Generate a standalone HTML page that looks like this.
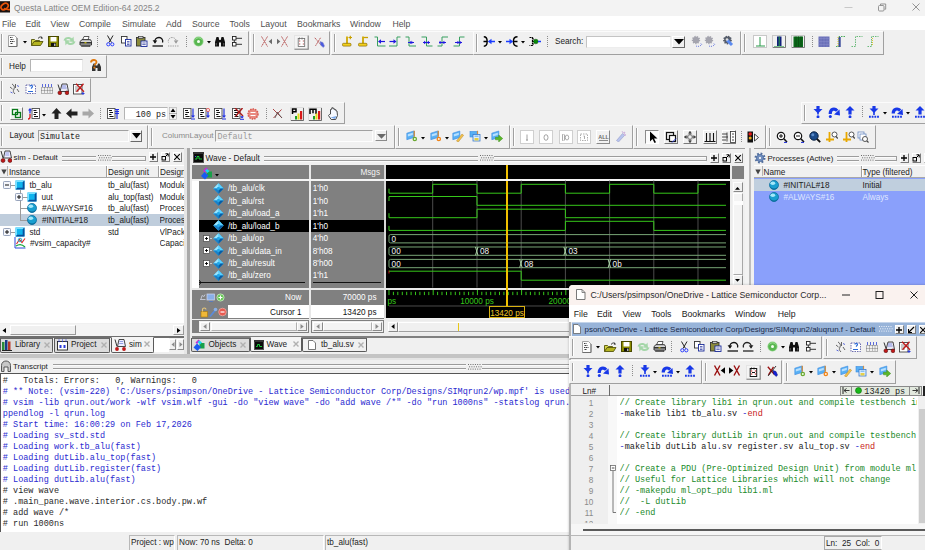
<!DOCTYPE html>
<html><head><meta charset="utf-8"><title>Questa Lattice OEM Edition-64 2025.2</title><style>
html,body{margin:0;padding:0}
body{width:925px;height:550px;overflow:hidden;background:#f0f0f0;position:relative;font-family:"Liberation Sans",sans-serif}
div,span,svg{position:absolute;box-sizing:border-box}
span{white-space:pre}
.s{font-family:"Liberation Sans",sans-serif}
.m{font-family:"Liberation Mono",monospace}
</style></head><body>
<div style="left:0px;top:0px;width:925px;height:16px;background:#f3f3f3;"></div>
<svg style="left:0px;top:0px;" width="11" height="14" viewBox="0 0 11 14"><rect x="0" y="1.200" width="10" height="11.300" fill="#1a1210"/><ellipse cx="4.600" cy="6.500" rx="3.900" ry="2.700" transform="rotate(-35 4.600 6.500)" fill="none" stroke="#e8540a" stroke-width="1.700"/><path d="M4 8.500c2 0 3.500 1.500 6 1" fill="none" stroke="#e8540a" stroke-width="1.600"/></svg>
<span class="s" style="left:14px;top:2.2px;height:12px;line-height:12px;font-size:8.5px;color:#858585;">Questa Lattice OEM Edition-64 2025.2</span>
<svg style="left:840px;top:0px;" width="85" height="16" viewBox="0 0 85 16"><path d="M4.5 7.5h8" stroke="#c8c8c8" stroke-width="1"/><rect x="38.5" y="5.5" width="5.5" height="5.5" rx="1" fill="none" stroke="#8a8a8a" stroke-width="0.9"/><path d="M40.5 5.2v-1.2h5.2v5.2h-1.2" fill="none" stroke="#8a8a8a" stroke-width="0.9"/><path d="M72.5 3.5l7 7m0-7l-7 7" stroke="#8a8a8a" stroke-width="0.9"/></svg>
<div style="left:0px;top:16.2px;width:925px;height:14.3px;background:#ffffff;"></div>
<span class="s" style="left:2px;top:17.8px;height:12px;line-height:12px;font-size:8.7px;color:#505050;">File</span>
<span class="s" style="left:25.5px;top:17.8px;height:12px;line-height:12px;font-size:8.7px;color:#505050;">Edit</span>
<span class="s" style="left:50.5px;top:17.8px;height:12px;line-height:12px;font-size:8.7px;color:#505050;">View</span>
<span class="s" style="left:79px;top:17.8px;height:12px;line-height:12px;font-size:8.7px;color:#505050;">Compile</span>
<span class="s" style="left:122px;top:17.8px;height:12px;line-height:12px;font-size:8.7px;color:#505050;">Simulate</span>
<span class="s" style="left:166px;top:17.8px;height:12px;line-height:12px;font-size:8.7px;color:#505050;">Add</span>
<span class="s" style="left:192px;top:17.8px;height:12px;line-height:12px;font-size:8.7px;color:#505050;">Source</span>
<span class="s" style="left:229.5px;top:17.8px;height:12px;line-height:12px;font-size:8.7px;color:#505050;">Tools</span>
<span class="s" style="left:260.5px;top:17.8px;height:12px;line-height:12px;font-size:8.7px;color:#505050;">Layout</span>
<span class="s" style="left:297px;top:17.8px;height:12px;line-height:12px;font-size:8.7px;color:#505050;">Bookmarks</span>
<span class="s" style="left:350px;top:17.8px;height:12px;line-height:12px;font-size:8.7px;color:#505050;">Window</span>
<span class="s" style="left:392.5px;top:17.8px;height:12px;line-height:12px;font-size:8.7px;color:#505050;">Help</span>
<div style="left:-2px;top:31px;width:251px;height:24px;background:#f0f0f0;border-top:1px solid #fbfbfb;border-left:1px solid #fbfbfb;border-right:1px solid #a0a0a0;border-bottom:1px solid #a0a0a0;"></div>
<div style="left:1px;top:34px;width:1px;height:18px;background:#a0a0a0;"></div>
<div style="left:2px;top:34px;width:1px;height:18px;background:#ffffff;"></div>
<svg style="left:8px;top:35.4px;" width="10" height="12" viewBox="0 0 10 12"><path d="M.5 .5h6l2.500 2.500v8.500h-8.500z" fill="#fcfcfc" stroke="#a4a4a4"/><path d="M9 3v8.500h-8.500" fill="none" stroke="#6e6e6e"/><path d="M2 2.500h2.500M2.500 4.500h3M2 6.500h4.500M2.500 8.500h2.500" stroke="#3a3a3a" stroke-width="1" stroke-dasharray="1.500 .5"/></svg>
<svg style="left:23px;top:40.9px;" width="4" height="3" viewBox="0 0 4 3"><path d="M0 0h4L2 2.4z" fill="#000"/></svg>
<svg style="left:31px;top:36.4px;" width="13" height="10" viewBox="0 0 13 10"><path d="M7 2.500c1.500-2 3.500-2 4.500-.5" fill="none" stroke="#222" stroke-width=".9"/><path d="M10.300 .8l1.500 1.400-2 .5z" fill="#222"/><path d="M.5 9.500v-6h3l1 1h4v1.500" fill="#d8d84a" stroke="#55550a" stroke-width=".9"/><path d="M.5 9.500l2.500-4h9l-2.500 4z" fill="#b4b420" stroke="#55550a" stroke-width=".9"/></svg>
<svg style="left:48px;top:35.9px;" width="11" height="11" viewBox="0 0 11 11"><rect x=".5" y=".5" width="10" height="10" fill="#8a8a00" stroke="#4a4a00"/><rect x="2.500" y="1" width="6" height="4.500" fill="#fff"/><rect x="3" y="7" width="5" height="3.500" fill="#111"/><rect x="6.200" y="7.600" width="1.200" height="2.400" fill="#ddd"/></svg>
<svg style="left:63px;top:35.4px;" width="13" height="12" viewBox="0 0 13 12"><path d="M.5 5.500c1-4 6-4.500 8.500-2l1.500-2 .5 5.500-5-.5 1.500-1.500c-1.500-1.500-4-1-5 .8z" fill="#a4d6a8"/><path d="M12.500 6.500c-1 4-6 4.500-8.500 2l-1.500 2-.5-5.500 5 .5-1.500 1.500c1.500 1.500 4 1 5-.8z" fill="#a4d6a8"/></svg>
<svg style="left:79px;top:35.9px;" width="13" height="11" viewBox="0 0 13 11"><path d="M3.500 4l1.500-3.500h5l-1 3.500z" fill="#fff" stroke="#333" stroke-width=".8"/><path d="M1 5.500l2-1.800h8.500l1 1.800v3.500h-11.500z" fill="#d8d8d8" stroke="#222" stroke-width=".9"/><rect x="1" y="6" width="11.500" height="1.600" fill="#333"/><rect x="5.500" y="6.300" width="2" height="1" fill="#e6d700"/><path d="M2.500 9.500h8.500v1h-8.500z" fill="#fff" stroke="#222" stroke-width=".7"/></svg>
<div style="left:97px;top:35.9px;width:1px;height:11px;border-left:1px dotted #8c8c8c;"></div>
<svg style="left:106px;top:35.4px;" width="9" height="12" viewBox="0 0 9 12"><path d="M1.500 .5l4 7M7 .5l-4 7" stroke="#222" stroke-width="1"/><circle cx="2.300" cy="9.300" r="1.600" fill="none" stroke="#2a3cff" stroke-width="1"/><circle cx="6.300" cy="9.300" r="1.600" fill="none" stroke="#2a3cff" stroke-width="1"/></svg>
<svg style="left:121px;top:35.9px;" width="11" height="11" viewBox="0 0 11 11"><rect x=".5" y=".5" width="5.500" height="6.500" fill="#fff" stroke="#333" stroke-width=".9"/><rect x="4.500" y="3.500" width="5.500" height="6.500" fill="#fff" stroke="#1a2a9a" stroke-width=".9"/><path d="M6 5.500h2.500M6 7h2.500M6 8.500h2.500" stroke="#1a2a9a" stroke-width=".7"/></svg>
<svg style="left:136px;top:35.9px;" width="12" height="11" viewBox="0 0 12 11"><rect x=".5" y="1.500" width="8.500" height="8.500" fill="#8a8a3a" stroke="#333" stroke-width=".9"/><rect x="2.500" y=".3" width="4.500" height="2.200" fill="#ccc" stroke="#333" stroke-width=".7"/><rect x="5" y="5" width="6" height="5.500" fill="#fff" stroke="#1a2a9a" stroke-width=".9"/><path d="M6.300 7h3.400M6.300 8.600h3.400" stroke="#1a2a9a" stroke-width=".7"/></svg>
<svg style="left:152px;top:35.9px;" width="12" height="11" viewBox="0 0 12 11"><g><path d="M3 6.500c-1-3 1.500-5 4-5s4.500 2.500 3.500 5" fill="none" stroke="#111" stroke-width="1.300"/><path d="M.6 4.300l2.400 3.500 2.200-3.300z" fill="#111"/><path d="M.5 10h10.500" stroke="#111" stroke-width="1.300"/></g></svg>
<svg style="left:167px;top:35.9px;" width="12" height="11" viewBox="0 0 12 11"><g transform="translate(12,0) scale(-1,1)"><path d="M3 6.500c-1-3 1.500-5 4-5s4.500 2.500 3.500 5" fill="none" stroke="#9a9a9a" stroke-width="1" stroke-dasharray="1.300 1"/><path d="M.6 4.300l2.400 3.500 2.200-3.300z" fill="#9a9a9a"/><path d="M.5 10h10.500" stroke="#9a9a9a" stroke-width="1" stroke-dasharray="1.300 1"/></g></svg>
<div style="left:186px;top:35.9px;width:1px;height:11px;border-left:1px dotted #8c8c8c;"></div>
<svg style="left:192.5px;top:35.9px;" width="11" height="11" viewBox="0 0 11 11"><circle cx="5.500" cy="5.500" r="5" fill="#8fd488"/><circle cx="5.500" cy="5.500" r="4.200" fill="#58b650"/><circle cx="5.500" cy="5.500" r="1.500" fill="#f4fff2"/><path d="M2.500 3.500a3.500 3.500 0 0 1 6 0" fill="none" stroke="#a8e4a0" stroke-width=".8"/></svg>
<svg style="left:207px;top:40.9px;" width="4" height="3" viewBox="0 0 4 3"><path d="M0 0h4L2 2.4z" fill="#000"/></svg>
<svg style="left:214px;top:35.9px;" width="12" height="11" viewBox="0 0 12 11"><path d="M1 10.500v-4.500l1.500-5h2l.8 3h1.400l.8-3h2l1.500 5v4.500h-4v-4h-2v4z" fill="#111"/><path d="M2.200 7v2.500M9.800 7v2.500" stroke="#777" stroke-width=".8"/></svg>
<svg style="left:232px;top:35.9px;" width="11" height="11" viewBox="0 0 11 11"><rect x=".5" y=".5" width="3.500" height="3.500" fill="#fff" stroke="#222" stroke-width=".9"/><rect x=".5" y="6.500" width="3.500" height="3.500" fill="#fff" stroke="#222" stroke-width=".9"/><path d="M4 2.300h6M4 8.300h6M2.300 4v2.500" stroke="#222" stroke-width=".9"/></svg>
<div style="left:250px;top:31px;width:80px;height:24px;background:#f0f0f0;border-top:1px solid #fbfbfb;border-left:1px solid #fbfbfb;border-right:1px solid #a0a0a0;border-bottom:1px solid #a0a0a0;"></div>
<div style="left:253px;top:34px;width:1px;height:18px;background:#a0a0a0;"></div>
<div style="left:254px;top:34px;width:1px;height:18px;background:#ffffff;"></div>
<svg style="left:260px;top:35.9px;" width="13" height="11" viewBox="0 0 13 11"><g><path d="M1.500 .5l6 10M7.500 .5l-6 10" stroke="#b85a5a" stroke-width="1" stroke-dasharray="1.600 .5"/><path d="M12 2.800v5.400l-3.300-2.700z" fill="#6a6a6a"/></g></svg>
<svg style="left:276px;top:35.9px;" width="13" height="11" viewBox="0 0 13 11"><g transform="translate(13,0) scale(-1,1)"><path d="M1.500 .5l6 10M7.500 .5l-6 10" stroke="#b85a5a" stroke-width="1" stroke-dasharray="1.600 .5"/><path d="M12 2.800v5.400l-3.300-2.700z" fill="#6a6a6a"/></g></svg>
<svg style="left:293.8px;top:35.1px;" width="15" height="15" viewBox="0 0 15 15"><rect x=".5" y=".5" width="13.500" height="13.700" fill="#f4f4f4" stroke="#e4e4e4"/><path d="M.5 14.200h14M14.200 .5v14" stroke="#7a7a7a" stroke-width="1"/><rect x="4.200" y="3.500" width="6.500" height="8" fill="#fff" stroke="#6a6a6a" stroke-width="0.8"/><path d="M5.500 2.500v2M8 2.500v2" stroke="#6a6a6a" stroke-width=".8"/><path d="M5 6h1.300M8.800 6h1.300M5 9h1.300M8.800 9h1.300" stroke="#b85a5a" stroke-width="1"/></svg>
<svg style="left:314px;top:36.9px;" width="11" height="12" viewBox="0 0 11 12"><path d="M.8 .8l6.500 7.500M6.500 .8l-5 8" stroke="#b85a5a" stroke-width="1" stroke-dasharray="1.600 .5"/><path d="M6 4.500l3 1 1.500 3.500-1.200 1.500-2.800-2.500z" fill="#4a5ae0" stroke="#8a8ac0" stroke-width=".5"/></svg>
<div style="left:331px;top:31px;width:143px;height:24px;background:#f0f0f0;border-top:1px solid #fbfbfb;border-left:1px solid #fbfbfb;border-right:1px solid #a0a0a0;border-bottom:1px solid #a0a0a0;"></div>
<div style="left:334px;top:34px;width:1px;height:18px;background:#a0a0a0;"></div>
<div style="left:335px;top:34px;width:1px;height:18px;background:#ffffff;"></div>
<svg style="left:341px;top:35.4px;" width="12" height="12" viewBox="0 0 12 12"><path d="M6 1.500v7.500" stroke="#d0a800" stroke-width="1.800"/><rect x="1.500" y="8.300" width="8.500" height="2.800" rx="1" fill="#f2cf1e" stroke="#8a6c00" stroke-width=".7"/><path d="M7.500 2.500h3.500M9.300 .8v3.500" stroke="#c8a000" stroke-width="1.200"/></svg>
<svg style="left:356.5px;top:35.4px;" width="12" height="12" viewBox="0 0 12 12"><path d="M6 1.500v7.500" stroke="#d0a800" stroke-width="1.800"/><rect x="1.500" y="8.300" width="8.500" height="2.800" rx="1" fill="#f2cf1e" stroke="#8a6c00" stroke-width=".7"/><path d="M6.500 2.500h4.500" stroke="#c8a000" stroke-width="1.300"/></svg>
<svg style="left:374px;top:35.9px;" width="12" height="11" viewBox="0 0 12 11"><path d="M.5 1h3v9h8" fill="none" stroke="#38a060" stroke-width="1"/><path d="M11 5.500h-6" stroke="#2018e0" stroke-width="1.200"/><path d="M4 5.500l3-2.200v4.400z" fill="#2018e0"/></svg>
<svg style="left:389px;top:35.9px;" width="12" height="11" viewBox="0 0 12 11"><path d="M0 10h8v-9h3.500" fill="none" stroke="#38a060" stroke-width="1"/><path d="M.5 5.500h6" stroke="#2018e0" stroke-width="1.200"/><path d="M7.500 5.500l-3-2.200v4.400z" fill="#2018e0"/></svg>
<svg style="left:405px;top:35.9px;" width="12" height="11" viewBox="0 0 12 11"><path d="M.5 1h3.500v9h7" fill="none" stroke="#38a060" stroke-width="1"/><path d="M3 6.500h6" stroke="#2018e0" stroke-width="1"/><path d="M4 6.500l2.400-1.800v3.600zM8.500 6.500l-2.400-1.800v3.600z" fill="#2018e0"/></svg>
<svg style="left:421px;top:35.9px;" width="12" height="11" viewBox="0 0 12 11"><path d="M.5 1h5v9h6" fill="none" stroke="#38a060" stroke-width="1"/><path d="M2 6.500h7" stroke="#2018e0" stroke-width="1"/><path d="M5.500 6.500l-2.400-1.800v3.600zM5.500 6.500l2.400-1.800v3.600z" fill="#2018e0"/></svg>
<svg style="left:437px;top:35.9px;" width="12" height="11" viewBox="0 0 12 11"><path d="M.5 10h4.500v-9h6" fill="none" stroke="#38a060" stroke-width="1"/><path d="M2 6.500h7" stroke="#2018e0" stroke-width="1"/><path d="M5 6.500l-2.400-1.800v3.600zM5 6.500l2.400-1.800v3.600z" fill="#2018e0"/></svg>
<svg style="left:453px;top:35.9px;" width="12" height="11" viewBox="0 0 12 11"><path d="M.5 10h6v-9h5" fill="none" stroke="#38a060" stroke-width="1"/><path d="M2 6.500h7" stroke="#2018e0" stroke-width="1"/><path d="M3 6.500l2.400-1.800v3.600zM9 6.500l-2.400-1.800v3.600z" fill="#2018e0"/></svg>
<div style="left:473px;top:31px;width:268px;height:24px;background:#f0f0f0;border-top:1px solid #fbfbfb;border-left:1px solid #fbfbfb;border-right:1px solid #a0a0a0;border-bottom:1px solid #a0a0a0;"></div>
<div style="left:476px;top:34px;width:1px;height:18px;background:#a0a0a0;"></div>
<div style="left:477px;top:34px;width:1px;height:18px;background:#ffffff;"></div>
<svg style="left:483px;top:35.9px;" width="12" height="11" viewBox="0 0 12 11"><path d="M.8 .8c4.500 0 4.500 9.400 0 9.400M.5 5.500h3.500" fill="none" stroke="#000" stroke-width="1.400"/><path d="M12 5.500h-4" stroke="#1a3cff" stroke-width="1.500"/><path d="M4.800 5.500l3.700-2.800v5.600z" fill="#1a3cff"/></svg>
<svg style="left:498px;top:40.9px;" width="4" height="3" viewBox="0 0 4 3"><path d="M0 0h4L2 2.4z" fill="#000"/></svg>
<svg style="left:506px;top:35.9px;" width="12" height="11" viewBox="0 0 12 11"><path d="M11.500 .8c-5.500 0-5.500 9.400 0 9.400M7.500 5.500h4" fill="none" stroke="#000" stroke-width="1.400"/><path d="M0 5.500h4" stroke="#1a3cff" stroke-width="1.500"/><path d="M7.200 5.500l-3.700-2.800v5.600z" fill="#1a3cff"/></svg>
<svg style="left:520.5px;top:40.9px;" width="4" height="3" viewBox="0 0 4 3"><path d="M0 0h4L2 2.4z" fill="#000"/></svg>
<svg style="left:529px;top:35.9px;" width="12" height="11" viewBox="0 0 12 11"><path d="M.5 1.500h3v8h-3M3.500 3h1.500M3.500 8h1.500" fill="none" stroke="#000" stroke-width="1.200" stroke-dasharray="2 .7"/><path d="M3 5.500h2" stroke="#000" stroke-width="1.200"/><circle cx="6.800" cy="5.500" r="2.300" fill="#0a8a0a" stroke="#064a06" stroke-width=".5"/><path d="M9 5.500h3" stroke="#1a3cff" stroke-width="1.500"/></svg>
<div style="left:547px;top:35.9px;width:1px;height:11px;border-left:1px dotted #8c8c8c;"></div>
<span class="s" style="left:555px;top:35.8px;height:12px;line-height:12px;font-size:8.2px;color:#222;">Search:</span>
<div style="left:586px;top:35.5px;width:85px;height:12.5px;background:#fff;border:1px solid #c4c4c4;border-right-color:#ededed;border-bottom-color:#ededed;"></div>
<div style="left:672px;top:35.5px;width:13px;height:12.5px;background:#f0f0f0;border:1px solid #fff;border-right-color:#6a6a6a;border-bottom-color:#6a6a6a;"></div>
<svg style="left:673.5px;top:39.3px;" width="10" height="6" viewBox="0 0 10 6"><path d="M0 0h10L5 5.500z" fill="#000"/></svg>
<svg style="left:691px;top:35.4px;" width="12" height="12" viewBox="0 0 12 12"><circle cx="5" cy="5" r="3.200" fill="#a4a4ae" stroke="#a4a4ae" stroke-width="2" stroke-dasharray="1.200 1"/><path d="M5 11c2 1 5 0 6-2l-1.500-.5" fill="none" stroke="#6a7ae0" stroke-width="1" stroke-dasharray="1 1"/></svg>
<svg style="left:704px;top:35.4px;" width="12" height="12" viewBox="0 0 12 12"><circle cx="5" cy="5" r="3.200" fill="#a4a4ae" stroke="#a4a4ae" stroke-width="2" stroke-dasharray="1.200 1"/><path d="M5 11c2 1 5 0 6-2l-1.500-.5" fill="none" stroke="#6a7ae0" stroke-width="1" stroke-dasharray="1 1"/></svg>
<svg style="left:721.5px;top:35.4px;" width="12" height="12" viewBox="0 0 12 12"><circle cx="5.500" cy="5" r="3.400" fill="#555c6a" stroke="#555c6a" stroke-width="2" stroke-dasharray="1.300 1"/><path d="M5 5l5 5" stroke="#5a8af0" stroke-width="3"/><circle cx="5" cy="4.500" r="1.300" fill="#ddd"/></svg>
<div style="left:741px;top:31px;width:143px;height:24px;background:#f0f0f0;border-top:1px solid #fbfbfb;border-left:1px solid #fbfbfb;border-right:1px solid #a0a0a0;border-bottom:1px solid #a0a0a0;"></div>
<div style="left:744px;top:34px;width:1px;height:18px;background:#a0a0a0;"></div>
<div style="left:745px;top:34px;width:1px;height:18px;background:#ffffff;"></div>
<svg style="left:753px;top:34.9px;" width="14" height="13" viewBox="0 0 14 13"><rect x=".5" y=".5" width="13" height="12" fill="#fff" stroke="#c8c8c8"/><path d="M7 2v9M3 11h9" stroke="#2a9a4a" stroke-width="1"/></svg>
<svg style="left:772px;top:34.9px;" width="14" height="13" viewBox="0 0 14 13"><rect x=".5" y=".5" width="13" height="12" fill="#f0f0f0" stroke="#c8c8c8"/><path d="M1 12.500h12.500M13.500 1v11.500" stroke="#7a7a7a" stroke-width="1"/><rect x="5" y="1.500" width="4.500" height="10" fill="#10207a"/><path d="M7.200 1.500v10" stroke="#2a9a4a" stroke-width="1"/><path d="M2 11.500h10" stroke="#7ac08a" stroke-width="1"/></svg>
<svg style="left:791px;top:34.9px;" width="14" height="13" viewBox="0 0 14 13"><rect x=".5" y=".5" width="13" height="12" fill="#f0f0f0" stroke="#c8c8c8"/><path d="M1 12.500h12.500M13.500 1v11.500" stroke="#7a7a7a" stroke-width="1"/><rect x="2.500" y="1.500" width="9.500" height="10.500" fill="#0a6a1a"/><path d="M5 1.500v10.500M7.500 1.500v10.500M10 1.500v10.500" stroke="#0a4a10" stroke-width=".8"/></svg>
<div style="left:812px;top:35.9px;width:1px;height:11px;border-left:1px dotted #8c8c8c;"></div>
<svg style="left:818px;top:35.9px;" width="12" height="12" viewBox="0 0 12 12"><rect x=".5" y=".5" width="11" height="10.500" fill="#6a70b8"/><path d="M.5 2.500h11M.5 5.500h11M.5 8.500h11M3 .5v10.500M6 .5v10.500M9 .5v10.500" stroke="#9aa0d8" stroke-width=".6" stroke-dasharray="1 1"/></svg>
<svg style="left:834.5px;top:35.9px;" width="12" height="12" viewBox="0 0 12 12"><path d="M1 10.500h3v-10h7" fill="none" stroke="#4aaa5a" stroke-width="1" stroke-dasharray="1.500 1"/><rect x="3.500" y="1" width="2.200" height="10" fill="#3a4a9a"/><path d="M3 1v10" stroke="#d8c020" stroke-width=".9" stroke-dasharray="1 1"/></svg>
<svg style="left:851px;top:35.9px;" width="12" height="12" viewBox="0 0 12 12"><path d="M.5 10.500h4v-10h7" fill="none" stroke="#6aba7a" stroke-width="1" stroke-dasharray="1.500 1"/></svg>
<svg style="left:866.5px;top:35.9px;" width="12" height="12" viewBox="0 0 12 12"><path d="M.5 10.500h4v-10h7" fill="none" stroke="#6aba7a" stroke-width="1" stroke-dasharray="1.500 1"/><path d="M5.500 2v8" stroke="#d8c020" stroke-width=".9" stroke-dasharray="1 1"/></svg>
<div style="left:-2px;top:55px;width:109px;height:23px;background:#f0f0f0;border-top:1px solid #fbfbfb;border-left:1px solid #fbfbfb;border-right:1px solid #a0a0a0;border-bottom:1px solid #a0a0a0;"></div>
<div style="left:1px;top:58px;width:1px;height:17px;background:#a0a0a0;"></div>
<div style="left:2px;top:58px;width:1px;height:17px;background:#ffffff;"></div>
<span class="s" style="left:9px;top:60.7px;height:12px;line-height:12px;font-size:8.2px;color:#222;">Help</span>
<div style="left:30px;top:59px;width:53px;height:13px;background:#fff;border:1px solid #b4b4b4;border-right-color:#e8e8e8;border-bottom-color:#e8e8e8;"></div>
<svg style="left:89px;top:59px;" width="13" height="13" viewBox="0 0 13 13"><path d="M3 12v-4l1.500-3.500h1.500l.7 2h1.600l.7-2h1.500l1.500 3.500v4h-3.500v-3h-2v3z" fill="#333"/><path d="M2 3.500c0-3 5.500-3.500 5.500-.5 0 1.800-2 1.800-2 3.500" fill="none" stroke="#e07a10" stroke-width="1.800"/><circle cx="5.400" cy="8.600" r="1.100" fill="#e07a10"/></svg>
<div style="left:-2px;top:78px;width:93px;height:24px;background:#f0f0f0;border-top:1px solid #fbfbfb;border-left:1px solid #fbfbfb;border-right:1px solid #a0a0a0;border-bottom:1px solid #a0a0a0;"></div>
<div style="left:1px;top:81px;width:1px;height:18px;background:#a0a0a0;"></div>
<div style="left:2px;top:81px;width:1px;height:18px;background:#ffffff;"></div>
<svg style="left:9px;top:82.5px;" width="12" height="12" viewBox="0 0 12 12"><path d="M3 1c2 1 3 3 2 5s-1 3 1 5M6.500 1v4M1 4l2.500 2M8 6l2 3" fill="none" stroke="#555" stroke-width=".9"/><path d="M8 2.500l2 1M1.500 9l2 1" stroke="#4a5ad8" stroke-width=".9"/></svg>
<svg style="left:25px;top:82.5px;" width="12" height="12" viewBox="0 0 12 12"><rect x="1" y="2" width="9.500" height="8.500" fill="#fff" stroke="#4a4a9a" stroke-width=".8" stroke-dasharray="1.500 1"/><path d="M5 3.500c0-1.500 2.500-1.500 2.500 0 0 1-1.200 1-1.200 2.200" fill="none" stroke="#2a6ad8" stroke-width="1.100"/><path d="M3 8.500h5" stroke="#2a6ad8" stroke-width="1"/></svg>
<svg style="left:40.5px;top:82.5px;" width="12" height="12" viewBox="0 0 12 12"><path d="M1.500 1v3M4.500 1v3M7.500 1v3M10.500 1v3" stroke="#4a5ad8" stroke-width=".9"/><rect x=".5" y="4.500" width="11" height="6" fill="none" stroke="#555" stroke-width=".8" stroke-dasharray="1 1"/><path d="M3.500 4.500v6M6.500 4.500v6M9 4.500v6M.5 7.500h11" stroke="#555" stroke-width=".7" stroke-dasharray="1 1"/></svg>
<svg style="left:57px;top:82.5px;" width="12" height="12" viewBox="0 0 12 12"><path d="M3 8.500l2-7.500h5l1.500 7.500z" fill="#e8e8f4" stroke="#333" stroke-width=".9"/><path d="M5 3h4M4.600 5h5" stroke="#5a6ad8" stroke-width=".7"/><circle cx="2.800" cy="9.800" r="1.900" fill="#c01818" stroke="#400" stroke-width=".5"/><circle cx="10" cy="9.800" r="1.900" fill="#c01818" stroke="#400" stroke-width=".5"/><path d="M1 1.500l2 6" stroke="#333" stroke-width="1"/></svg>
<svg style="left:73px;top:82.5px;" width="12" height="12" viewBox="0 0 12 12"><rect x=".5" y="1.500" width="8.500" height="9.500" fill="#fff" stroke="#444" stroke-width=".9"/><path d="M2 4h5M2 6h5M2 8h4" stroke="#666" stroke-width=".7"/><path d="M3 .8l8 8M10.500 .8l-7 8" stroke="#c01818" stroke-width="1.300"/><path d="M8.500 10.500h3M10 9v3" stroke="#2a3ad8" stroke-width="1"/></svg>
<div style="left:-2px;top:102px;width:347px;height:22px;background:#f0f0f0;border-top:1px solid #fbfbfb;border-left:1px solid #fbfbfb;border-right:1px solid #a0a0a0;border-bottom:1px solid #a0a0a0;"></div>
<div style="left:1px;top:105px;width:1px;height:16px;background:#a0a0a0;"></div>
<div style="left:2px;top:105px;width:1px;height:16px;background:#ffffff;"></div>
<div style="left:10px;top:107px;width:13px;height:13px;background:#f0f0f0;border:1px solid #fff;border-right-color:#7a7a7a;border-bottom-color:#7a7a7a;"></div>
<svg style="left:11px;top:108px;" width="11" height="11" viewBox="0 0 11 11"><rect x="1.500" y="1.500" width="5" height="5" fill="#fff" stroke="#0a7a1a" stroke-width="1.300"/><rect x="4.500" y="4.500" width="5" height="5" fill="none" stroke="#0a7a1a" stroke-width="1.300"/></svg>
<svg style="left:27.5px;top:108px;" width="14" height="12" viewBox="0 0 14 12"><g transform="translate(2.500,0)"><rect x="1.500" y=".500" width="7.500" height="10" fill="#fff" stroke="#4a4a4a" stroke-width=".9"/><path d="M3 2.500h3M3.500 4.500h3.500M3 6.500h2.500M3.500 8.500h4" stroke="#111" stroke-width="1"/></g><path d="M2 5.500v-4" stroke="#2030e0" stroke-width="1.300"/><path d="M2 0l-2 2.500h4z" fill="#2030e0"/><path d="M2 6v3c0 1.500-1 2-2 2" fill="none" stroke="#d81818" stroke-width="1.300"/></svg>
<svg style="left:42px;top:113.5px;" width="4" height="3" viewBox="0 0 4 3"><path d="M0 0h4L2 2.4z" fill="#000"/></svg>
<svg style="left:50.5px;top:108px;" width="12" height="11" viewBox="0 0 12 11"><path d="M5.500 0l5 5.500h-3v5.500h-4v-5.500h-3z" fill="#222"/></svg>
<svg style="left:66px;top:108px;" width="12" height="11" viewBox="0 0 12 11"><path d="M0 5.500l5.500-5v3h6v4h-6v3z" fill="#222"/></svg>
<svg style="left:81.5px;top:108px;" width="12" height="11" viewBox="0 0 12 11"><path d="M12 5.500l-5.500-5v3h-6v4h6v3z" fill="#a8a8a8"/></svg>
<div style="left:100px;top:108px;width:1px;height:11px;border-left:1px dotted #8c8c8c;"></div>
<svg style="left:105.5px;top:108px;" width="14" height="12" viewBox="0 0 14 12"><rect x="1.500" y=".500" width="7.500" height="10" fill="#fff" stroke="#4a4a4a" stroke-width=".9"/><path d="M3 2.500h3M3.500 4.500h3.500M3 6.500h2.500M3.500 8.500h4" stroke="#111" stroke-width="1"/><path d="M11 1v10" stroke="#2030e0" stroke-width="1.200"/><path d="M9 1.500h4M9 3.500h4M9 5.500h4" stroke="#2030e0" stroke-width="1"/></svg>
<div style="left:124px;top:107px;width:44px;height:13px;background:#fff;border:1px solid #b4b4b4;border-right-color:#e8e8e8;border-bottom-color:#e8e8e8;"></div>
<span class="m" style="right:759px;top:108.7px;height:12px;line-height:12px;font-size:8.4px;color:#222;">100 ps</span>
<svg style="left:168.5px;top:107px;" width="8" height="13" viewBox="0 0 8 13"><rect x=".5" y=".5" width="7" height="12" fill="#f0f0f0" stroke="#b0b0b0" stroke-width=".6"/><path d="M4 1.500l2.500 3.500h-5zM4 11.500l2.500-3.500h-5z" fill="#000"/><path d="M0 6.500h8" stroke="#888" stroke-width=".6"/></svg>
<svg style="left:181.5px;top:108px;" width="14" height="12" viewBox="0 0 14 12"><rect x="1.500" y=".500" width="7.500" height="10" fill="#fff" stroke="#4a4a4a" stroke-width=".9"/><path d="M3 2.500h3M3.500 4.500h3.500M3 6.500h2.500M3.500 8.500h4" stroke="#111" stroke-width="1"/><path d="M11 .5v8" stroke="#2030e0" stroke-width="1.200"/><path d="M11 10l-2-2.500h4z" fill="#2030e0"/><path d="M9 11h4" stroke="#2030e0" stroke-width="1"/></svg>
<svg style="left:197px;top:108px;" width="14" height="12" viewBox="0 0 14 12"><rect x="1.500" y=".500" width="7.500" height="10" fill="#fff" stroke="#4a4a4a" stroke-width=".9"/><path d="M3 2.500h3M3.500 4.500h3.500M3 6.500h2.500M3.500 8.500h4" stroke="#111" stroke-width="1"/><path d="M11 3v5" stroke="#2030e0" stroke-width="1.200"/><path d="M11 10l-2-2.500h4z" fill="#2030e0"/><circle cx="11" cy="2" r="1.600" fill="none" stroke="#e85a5a" stroke-width=".9"/></svg>
<svg style="left:212.5px;top:108px;" width="14" height="12" viewBox="0 0 14 12"><rect x="1.500" y=".500" width="7.500" height="10" fill="#fff" stroke="#4a4a4a" stroke-width=".9"/><path d="M3 2.500h3M3.500 4.500h3.500M3 6.500h2.500M3.500 8.500h4" stroke="#111" stroke-width="1"/><path d="M11 .5v8" stroke="#2030e0" stroke-width="1.200"/><path d="M11 10l-2-2.500h4z" fill="#2030e0"/><path d="M9 11h4" stroke="#2030e0" stroke-width="1"/></svg>
<svg style="left:230.5px;top:108px;" width="14" height="12" viewBox="0 0 14 12"><rect x="1.500" y=".500" width="7.500" height="10" fill="#fff" stroke="#4a4a4a" stroke-width=".9"/><path d="M3 2.500h3M3.500 4.500h3.500M3 6.500h2.500M3.500 8.500h4" stroke="#111" stroke-width="1"/><path d="M4 0l8 8M11.500 0l-7 8.500" stroke="#a81818" stroke-width="1.400"/><path d="M11 8v1" stroke="#2030e0" stroke-width="1.200"/><path d="M11 10.500l-2-2h4z" fill="#2030e0"/><path d="M9 11.300h4" stroke="#2030e0" stroke-width="1"/></svg>
<svg style="left:247px;top:108px;" width="12" height="12" viewBox="0 0 12 12"><circle cx="6" cy="6" r="5" fill="#e88a80" stroke="#d85a50" stroke-width="1.500" stroke-dasharray="1.500 1"/><path d="M3.500 4.500h5M3.500 7.500h5" stroke="#fff" stroke-width="1"/></svg>
<div style="left:266px;top:108px;width:1px;height:11px;border-left:1px dotted #8c8c8c;"></div>
<svg style="left:272px;top:108px;" width="12" height="12" viewBox="0 0 12 12"><path d="M1 1l9 9M9.500 1.500l-8 8.500" stroke="#a03030" stroke-width=".9"/><path d="M3 10l2.500-6 2 3 2.500 3" fill="none" stroke="#555" stroke-width=".8"/></svg>
<svg style="left:289.5px;top:106.5px;" width="14" height="14" viewBox="0 0 14 14"><rect x=".5" y=".5" width="13" height="13" fill="#f0f0f0" stroke="#dcdcdc"/><path d="M1 13.500h12.500M13.500 1v12.500" stroke="#6a6a6a"/><path d="M2.500 7v-5h3.500v2.800h-3.500" fill="none" stroke="#000" stroke-width="1.500"/><rect x="5" y="9" width="2" height="3.500" fill="#18a028"/><rect x="7.500" y="6.500" width="2" height="6" fill="#e8d818"/><rect x="10" y="4" width="2.200" height="8.500" fill="#d81818"/></svg>
<svg style="left:308px;top:106.5px;" width="14" height="14" viewBox="0 0 14 14"><rect x=".5" y=".5" width="13" height="13" fill="#f0f0f0" stroke="#dcdcdc"/><path d="M1 13.500h12.500M13.500 1v12.500" stroke="#6a6a6a"/><path d="M2 7v-4.700h6v4.700M5 2.300v4" fill="none" stroke="#000" stroke-width="1.500"/><rect x="5" y="9" width="2" height="3.500" fill="#18a028"/><rect x="7.500" y="6.500" width="2" height="6" fill="#e8d818"/><rect x="10" y="4" width="2.200" height="8.500" fill="#d81818"/></svg>
<svg style="left:326.5px;top:107px;" width="12" height="13" viewBox="0 0 12 13"><path d="M3.500 7v-4.500l1.300-.3v-1.400h1.400v1h1.300v.8h1.300v1l1.200.4.500 4.500-1.800 4h-4.500l-2.700-4 .7-.8z" fill="#f6f9ff" stroke="#3a3a3a" stroke-width=".9"/><path d="M3.500 10.500l4.500 1.500 1.500-3z" fill="#78a8ec"/></svg>
<div style="left:801px;top:102px;width:132px;height:22px;background:#f0f0f0;border-top:1px solid #fbfbfb;border-left:1px solid #fbfbfb;border-right:1px solid #a0a0a0;border-bottom:1px solid #a0a0a0;"></div>
<div style="left:804px;top:105px;width:1px;height:16px;background:#a0a0a0;"></div>
<div style="left:805px;top:105px;width:1px;height:16px;background:#ffffff;"></div>
<svg style="left:812px;top:105.5px;" width="12" height="12" viewBox="0 0 12 12"><path d="M6 0v4" stroke="#1838e8" stroke-width="3.200"/><path d="M6 7.500l-4.500-4.500h9z" fill="#1838e8"/><path d="M6 6v2.500" stroke="#1838e8" stroke-width="1.600"/><circle cx="6" cy="10.800" r="1.500" fill="#1838e8"/></svg>
<svg style="left:827.5px;top:105.5px;" width="12" height="12" viewBox="0 0 12 12"><path d="M2.200 8c0-5.500 4.500-6 7-3.200" fill="none" stroke="#1838e8" stroke-width="3.200"/><path d="M12 9.500l-6-1 5.500-5z" fill="#1838e8"/><circle cx="2.300" cy="10.500" r="1.500" fill="#1838e8"/></svg>
<svg style="left:844px;top:105.5px;" width="12" height="12" viewBox="0 0 12 12"><path d="M6 3.500v5" stroke="#1838e8" stroke-width="3.200"/><path d="M6 0l-4.500 4.500h9z" fill="#1838e8"/><circle cx="6" cy="10.800" r="1.500" fill="#1838e8"/></svg>
<div style="left:862px;top:106px;width:1px;height:11px;border-left:1px dotted #8c8c8c;"></div>
<svg style="left:868px;top:105.5px;" width="12" height="12" viewBox="0 0 12 12"><path d="M6 0v3.500" stroke="#1838e8" stroke-width="3.200"/><path d="M6 7l-4.500-4.500h9z" fill="#1838e8"/><path d="M6 6v3" stroke="#1838e8" stroke-width="1.600"/><path d="M1 10.800h10" stroke="#1838e8" stroke-width="2" stroke-dasharray="1.800 .9"/></svg>
<svg style="left:883px;top:111.5px;" width="4" height="3" viewBox="0 0 4 3"><path d="M0 0h4L2 2.4z" fill="#000"/></svg>
<svg style="left:891px;top:105.5px;" width="12" height="12" viewBox="0 0 12 12"><path d="M2.200 7.500c0-5 4.500-5.500 7-3" fill="none" stroke="#1838e8" stroke-width="3.200"/><path d="M12 9l-6-1 5.500-5z" fill="#1838e8"/><path d="M1 10.800h10" stroke="#1838e8" stroke-width="2" stroke-dasharray="1.800 .9"/></svg>
<svg style="left:905.5px;top:111.5px;" width="4" height="3" viewBox="0 0 4 3"><path d="M0 0h4L2 2.4z" fill="#000"/></svg>
<svg style="left:914px;top:105.5px;" width="12" height="12" viewBox="0 0 12 12"><path d="M6 3.500v5" stroke="#1838e8" stroke-width="3.200"/><path d="M6 0l-4.500 4.500h9z" fill="#1838e8"/><path d="M1 10.800h10" stroke="#1838e8" stroke-width="2" stroke-dasharray="1.800 .9"/></svg>
<div style="left:-2px;top:125px;width:150px;height:23.5px;background:#f0f0f0;border-top:1px solid #fbfbfb;border-left:1px solid #fbfbfb;border-right:1px solid #a0a0a0;border-bottom:1px solid #a0a0a0;"></div>
<div style="left:1px;top:128px;width:1px;height:17.5px;background:#a0a0a0;"></div>
<div style="left:2px;top:128px;width:1px;height:17.5px;background:#ffffff;"></div>
<span class="s" style="left:9.5px;top:129.9px;height:12px;line-height:12px;font-size:8.2px;color:#222;">Layout</span>
<div style="left:38px;top:129.5px;width:91px;height:12.5px;background:#f1f1f1;border:1px solid #a0a0a0;border-right-color:#fdfdfd;border-bottom-color:#fdfdfd;"></div>
<span class="m" style="left:40px;top:130.5px;height:12px;line-height:12px;font-size:8.35px;color:#222;">Simulate</span>
<div style="left:130px;top:129.5px;width:12px;height:12px;background:#f0f0f0;border:1px solid #fff;border-right-color:#6a6a6a;border-bottom-color:#6a6a6a;"></div>
<svg style="left:131.5px;top:133px;" width="9" height="6" viewBox="0 0 9 6"><path d="M0 0h9L4.500 5.500z" fill="#000"/></svg>
<div style="left:148px;top:125px;width:247px;height:23.5px;background:#f0f0f0;border-top:1px solid #fbfbfb;border-left:1px solid #fbfbfb;border-right:1px solid #a0a0a0;border-bottom:1px solid #a0a0a0;"></div>
<div style="left:151px;top:128px;width:1px;height:17.5px;background:#a0a0a0;"></div>
<div style="left:152px;top:128px;width:1px;height:17.5px;background:#ffffff;"></div>
<span class="s" style="left:162px;top:129.9px;height:12px;line-height:12px;font-size:8px;color:#8a8a8a;">ColumnLayout</span>
<div style="left:215px;top:129.5px;width:157.5px;height:12.5px;background:#f1f1f1;border:1px solid #a0a0a0;border-right-color:#fdfdfd;border-bottom-color:#fdfdfd;"></div>
<span class="m" style="left:217.5px;top:130.5px;height:12px;line-height:12px;font-size:8.35px;color:#9a9a9a;">Default</span>
<div style="left:374.6px;top:129.5px;width:12.2px;height:11.8px;background:#f0f0f0;border:1px solid #fff;border-right-color:#8a8a8a;border-bottom-color:#8a8a8a;"></div>
<svg style="left:377px;top:134px;" width="9" height="5" viewBox="0 0 9 5"><path d="M0 0h9L4.500 4.700z" fill="#6a6a6a"/></svg>
<div style="left:395px;top:125px;width:115px;height:23.5px;background:#f0f0f0;border-top:1px solid #fbfbfb;border-left:1px solid #fbfbfb;border-right:1px solid #a0a0a0;border-bottom:1px solid #a0a0a0;"></div>
<div style="left:398px;top:128px;width:1px;height:17.5px;background:#a0a0a0;"></div>
<div style="left:399px;top:128px;width:1px;height:17.5px;background:#ffffff;"></div>
<svg style="left:406px;top:130.1px;" width="12" height="12" viewBox="0 0 12 12"><path d="M.8 3.200l7-2.200v6.500l-7 2.200z" fill="#58b0f4" stroke="#3a8ae0" stroke-width=".6"/><path d="M1.800 4.300l5-1.600v2.200l-5 1.600z" fill="#b8e0ff"/><path d="M8.300 .8v6" stroke="#c89050" stroke-width="1.400"/><circle cx="8.800" cy="9" r="2.300" fill="#6aa830"/><circle cx="8.800" cy="9" r="1" fill="#f0ffe8"/></svg>
<svg style="left:421px;top:136.7px;" width="4" height="3" viewBox="0 0 4 3"><path d="M0 0h4L2 2.4z" fill="#000"/></svg>
<svg style="left:430px;top:130.1px;" width="12" height="12" viewBox="0 0 12 12"><path d="M.8 3.200l7-2.200v6.500l-7 2.200z" fill="#58b0f4" stroke="#3a8ae0" stroke-width=".6"/><path d="M1.800 4.300l5-1.600v2.200l-5 1.600z" fill="#b8e0ff"/><path d="M8.300 .8v6" stroke="#c89050" stroke-width="1.400"/><circle cx="8.800" cy="9" r="2.300" fill="#f08418"/><circle cx="8.800" cy="9" r="1" fill="#fff0e0"/></svg>
<svg style="left:444.5px;top:136.7px;" width="4" height="3" viewBox="0 0 4 3"><path d="M0 0h4L2 2.4z" fill="#000"/></svg>
<svg style="left:452px;top:130.1px;" width="12" height="12" viewBox="0 0 12 12"><path d="M.8 3.200l7-2.200v6.500l-7 2.200z" fill="#58b0f4" stroke="#3a8ae0" stroke-width=".6"/><path d="M1.800 4.300l5-1.600v2.200l-5 1.600z" fill="#b8e0ff"/><path d="M4.500 11l5.500-7 1.600 1.300-5.300 6.700z" fill="#f2c24c" stroke="#b8862a" stroke-width=".5"/></svg>
<svg style="left:469px;top:130.1px;" width="12" height="12" viewBox="0 0 12 12"><rect x="1" y="1.500" width="7.500" height="5.500" fill="#58b0f4" stroke="#3a8ae0" stroke-width=".6"/><path d="M8.500 .8v4" stroke="#c89050" stroke-width="1.200"/><rect x="4" y="4.500" width="7" height="6.500" fill="#dceeff" stroke="#3a7ad0" stroke-width=".8"/><rect x="5.500" y="8" width="4" height="2.500" fill="#e8d048"/><rect x="5.500" y="5.500" width="4" height="1.500" fill="#8ac0f0"/></svg>
<svg style="left:483.5px;top:136.7px;" width="4" height="3" viewBox="0 0 4 3"><path d="M0 0h4L2 2.4z" fill="#000"/></svg>
<svg style="left:491px;top:130.1px;" width="12" height="12" viewBox="0 0 12 12"><path d="M.8 3.200l7-2.200v6.500l-7 2.200z" fill="#58b0f4" stroke="#3a8ae0" stroke-width=".6"/><path d="M1.800 4.300l5-1.600v2.200l-5 1.600z" fill="#b8e0ff"/><path d="M4.500 7.200h3.200v-2.200l4 3.500-4 3.500v-2.200h-3.200z" fill="#5ab82a" stroke="#3a8a1a" stroke-width=".5"/></svg>
<div style="left:510px;top:125px;width:123px;height:23.5px;background:#f0f0f0;border-top:1px solid #fbfbfb;border-left:1px solid #fbfbfb;border-right:1px solid #a0a0a0;border-bottom:1px solid #a0a0a0;"></div>
<div style="left:513px;top:128px;width:1px;height:17.5px;background:#a0a0a0;"></div>
<div style="left:514px;top:128px;width:1px;height:17.5px;background:#ffffff;"></div>
<svg style="left:520.2px;top:129.9px;" width="14" height="14" viewBox="0 0 14 14"><rect x=".5" y=".5" width="13" height="13" fill="#ffffff" stroke="#cfcfcf"/><g transform="translate(.5,.5)"><path d="M6.500 4v6M5.500 9.500h2" stroke="#8a8a8a" stroke-width=".8"/></g></svg>
<svg style="left:539.2px;top:129.9px;" width="14" height="14" viewBox="0 0 14 14"><rect x=".5" y=".5" width="13" height="13" fill="#ffffff" stroke="#cfcfcf"/><g transform="translate(.5,.5)"><ellipse cx="6.500" cy="7" rx="2" ry="2.800" fill="none" stroke="#8a8a8a" stroke-width=".8"/></g></svg>
<svg style="left:558.5px;top:129.9px;" width="14" height="14" viewBox="0 0 14 14"><rect x=".5" y=".5" width="13" height="13" fill="#ffffff" stroke="#cfcfcf"/><g transform="translate(.5,.5)"><path d="M3 4v6M3 4h1M3 10h1" stroke="#8a8a8a" stroke-width=".7"/><ellipse cx="7.500" cy="7" rx="1.700" ry="2.500" fill="none" stroke="#8a8a8a" stroke-width=".7"/><path d="M5 4v6" stroke="#8a8a8a" stroke-width=".7"/></g></svg>
<svg style="left:577.3px;top:129.9px;" width="14" height="14" viewBox="0 0 14 14"><rect x=".5" y=".5" width="13" height="13" fill="#ffffff" stroke="#cfcfcf"/><g transform="translate(.5,.5)"><rect x="3" y="3.500" width="7" height="6.500" fill="none" stroke="#8a8a8a" stroke-width=".7" stroke-dasharray="1.500 1"/><path d="M6 5.500h1v3" fill="none" stroke="#8a8a8a" stroke-width=".7"/></g></svg>
<div style="left:596.3px;top:129.9px;width:14px;height:14px;background:#f2f2f2;border:1px solid #fff;border-right-color:#8a8a8a;border-bottom-color:#8a8a8a;"></div>
<span class="s" style="left:598.3px;top:130.6px;height:12px;line-height:12px;font-size:5.4px;color:#6a6a6a;font-weight:bold;">ALL</span>
<div style="left:598.5px;top:140px;width:9.5px;height:1px;background:#8a8a8a;"></div>
<svg style="left:615px;top:130.2px;" width="12" height="12" viewBox="0 0 12 12"><path d="M1.500 10.500l6-7 2 2-6 6.500z" fill="#b8c4ee" stroke="#8a90c0" stroke-width=".5"/><path d="M7 1l1 2 2-1-1 2 2 1-2 .5" fill="none" stroke="#c8a8d8" stroke-width=".8"/></svg>
<div style="left:633px;top:125px;width:133px;height:23.5px;background:#f0f0f0;border-top:1px solid #fbfbfb;border-left:1px solid #fbfbfb;border-right:1px solid #a0a0a0;border-bottom:1px solid #a0a0a0;"></div>
<div style="left:636px;top:128px;width:1px;height:17.5px;background:#a0a0a0;"></div>
<div style="left:637px;top:128px;width:1px;height:17.5px;background:#ffffff;"></div>
<div style="left:645px;top:130px;width:14px;height:14px;background:#fbfbfb;border:1px solid #8a8a8a;border-right-color:#fff;border-bottom-color:#fff;"></div>
<div style="left:663.5px;top:130px;width:14px;height:14px;background:#f0f0f0;border:1px solid #fff;border-right-color:#7a7a7a;border-bottom-color:#7a7a7a;"></div>
<div style="left:682.5px;top:130px;width:14px;height:14px;background:#f0f0f0;border:1px solid #fff;border-right-color:#7a7a7a;border-bottom-color:#7a7a7a;"></div>
<div style="left:702.5px;top:130px;width:14px;height:14px;background:#f0f0f0;border:1px solid #fff;border-right-color:#7a7a7a;border-bottom-color:#7a7a7a;"></div>
<div style="left:721.5px;top:130px;width:14px;height:14px;background:#f0f0f0;border:1px solid #fff;border-right-color:#7a7a7a;border-bottom-color:#7a7a7a;"></div>
<svg style="left:646.5px;top:131px;" width="12" height="12" viewBox="0 0 12 12"><path d="M3 .5v10l2.500-2.500 2 4 1.500-.8-2-3.800h3.500z" fill="#000"/></svg>
<svg style="left:664.5px;top:131px;" width="12" height="12" viewBox="0 0 12 12"><rect x="1.500" y="1.500" width="7" height="7" fill="none" stroke="#111" stroke-width="1.200"/><rect x="4.500" y="4.500" width="6" height="6" fill="#fff" stroke="#111" stroke-width="1.200"/><path d="M7 11.500l4-4" stroke="#2a3ad8" stroke-width="1"/></svg>
<svg style="left:683.5px;top:131px;" width="12" height="12" viewBox="0 0 12 12"><path d="M6 .5v11M.5 6h11" stroke="#444" stroke-width="1"/><path d="M6 0l-2 2.500h4zM6 12l-2-2.500h4zM0 6l2.500-2v4zM12 6l-2.500-2v4z" fill="#444"/><rect x="4" y="4" width="4" height="4" fill="#f0f0f0" stroke="#444" stroke-width=".6"/></svg>
<svg style="left:703.5px;top:131px;" width="12" height="12" viewBox="0 0 12 12"><path d="M2.500 2v8.500M6 2v8.500M9.500 2v8.500M.5 10.500h11" stroke="#111" stroke-width="1.100"/></svg>
<svg style="left:721.5px;top:131px;" width="14" height="12" viewBox="0 0 14 12"><rect x="8.500" y=".5" width="5" height="11" fill="#fff" stroke="#333" stroke-width=".8"/><path d="M0 3h5M0 6h6M0 9h4M5 1.500v9M10 3h2M10 6h2M10 9h2" stroke="#333" stroke-width=".9"/></svg>
<div style="left:741px;top:131.2px;width:1px;height:11px;border-left:1px dotted #8c8c8c;"></div>
<svg style="left:746px;top:131px;" width="14" height="12" viewBox="0 0 14 12"><rect x="1.500" y=".5" width="5.500" height="11" fill="#111"/><circle cx="4.200" cy="3" r="1.700" fill="#e81818"/><circle cx="4.200" cy="7" r="1.500" fill="#e8a818"/><path d="M8.500 3v7l4-3.500z" fill="#fff" stroke="#111" stroke-width=".8"/></svg>
<div style="left:766px;top:125px;width:110px;height:23.5px;background:#f0f0f0;border-top:1px solid #fbfbfb;border-left:1px solid #fbfbfb;border-right:1px solid #a0a0a0;border-bottom:1px solid #a0a0a0;"></div>
<div style="left:769px;top:128px;width:1px;height:17.5px;background:#a0a0a0;"></div>
<div style="left:770px;top:128px;width:1px;height:17.5px;background:#ffffff;"></div>
<svg style="left:776px;top:130.7px;" width="12" height="12" viewBox="0 0 12 12"><circle cx="5" cy="5" r="3.700" fill="#fff" stroke="#111" stroke-width="1.200"/><path d="M7.800 7.800l3.200 3.200" stroke="#111" stroke-width="1.600"/><path d="M3 5h4M5 3v4" stroke="#111" stroke-width="1"/><path d="M8 11.500h3" stroke="#2a3ad8" stroke-width="1.200"/></svg>
<svg style="left:792.5px;top:130.7px;" width="12" height="12" viewBox="0 0 12 12"><circle cx="5" cy="5" r="3.700" fill="#fff" stroke="#111" stroke-width="1.200"/><path d="M7.800 7.800l3.200 3.200" stroke="#111" stroke-width="1.600"/><path d="M3 5h4" stroke="#111" stroke-width="1"/><path d="M8 11.500h3" stroke="#2a3ad8" stroke-width="1.200"/></svg>
<svg style="left:809px;top:130.7px;" width="12" height="12" viewBox="0 0 12 12"><circle cx="5" cy="5" r="4.200" fill="#1a4a8a" stroke="#0a2040" stroke-width="1"/><circle cx="3.800" cy="3.800" r="1.500" fill="#5a8ac8"/><path d="M8 8l3.200 3.200" stroke="#111" stroke-width="1.800"/></svg>
<svg style="left:826px;top:130.7px;" width="12" height="12" viewBox="0 0 12 12"><path d="M3.500 1v10M0 8.500h8" stroke="#e8a800" stroke-width="1.800"/><circle cx="8.500" cy="3.500" r="2.500" fill="#fff" stroke="#444" stroke-width=".9"/><path d="M10 5.500l1.800 2" stroke="#444" stroke-width="1.200"/></svg>
<svg style="left:842.5px;top:130.7px;" width="12" height="12" viewBox="0 0 12 12"><path d="M3.500 1v10M0 8.500h8" stroke="#e8a800" stroke-width="1.800"/><circle cx="8.500" cy="3.500" r="2.500" fill="#fff" stroke="#444" stroke-width=".9"/><path d="M10 5.500l1.800 2" stroke="#444" stroke-width="1.200"/></svg>
<svg style="left:857px;top:130.7px;" width="12" height="12" viewBox="0 0 12 12"><rect x="1" y="1" width="6" height="6" fill="#fff" stroke="#6a8ac0" stroke-width=".8"/><rect x="3" y="3" width="6" height="6" fill="#fff" stroke="#6a8ac0" stroke-width=".8"/><circle cx="8" cy="8" r="2.500" fill="#fff" stroke="#444" stroke-width=".9"/><path d="M9.800 9.800l1.700 1.700" stroke="#444" stroke-width="1.200"/></svg>
<svg style="left:0px;top:150px;" width="12" height="13" viewBox="0 0 12 13"><path d="M3.500 8l1.500-7h5l1.500 7z" fill="#eef" stroke="#333" stroke-width=".9"/><path d="M5.500 3h3.500M5.200 5h4" stroke="#6a7ad8" stroke-width=".7"/><path d="M1 1l2 7" stroke="#333" stroke-width="1"/><circle cx="3" cy="10.500" r="2" fill="#c01818" stroke="#400" stroke-width=".5"/><circle cx="10" cy="10.500" r="2" fill="#c01818" stroke="#400" stroke-width=".5"/></svg>
<span class="s" style="left:13.5px;top:152.4px;height:12px;line-height:12px;font-size:7.9px;color:#222;">sim - Default</span>
<div style="left:62px;top:155.6px;width:33.5px;height:1px;background:#9c9c9c;"></div>
<div style="left:62px;top:156.6px;width:33.5px;height:1px;background:#fbfbfb;"></div>
<div style="left:62px;top:159.5px;width:33.5px;height:1px;background:#9c9c9c;"></div>
<div style="left:62px;top:160.5px;width:33.5px;height:1px;background:#fbfbfb;"></div>
<div style="left:111.5px;top:155.6px;width:33.5px;height:1px;background:#9c9c9c;"></div>
<div style="left:111.5px;top:156.6px;width:33.5px;height:1px;background:#fbfbfb;"></div>
<div style="left:111.5px;top:159.5px;width:33.5px;height:1px;background:#9c9c9c;"></div>
<div style="left:111.5px;top:160.5px;width:33.5px;height:1px;background:#fbfbfb;"></div>
<div style="left:145px;top:155.6px;width:1px;height:5px;background:#9c9c9c;"></div>
<svg style="left:97.5px;top:155.1px;" width="14" height="6" viewBox="0 0 14 6"><rect x="0.0" y="0" width="1" height="1" fill="#6a6a6a"/><rect x="2.3" y="0" width="1" height="1" fill="#6a6a6a"/><rect x="4.6" y="0" width="1" height="1" fill="#6a6a6a"/><rect x="6.9" y="0" width="1" height="1" fill="#6a6a6a"/><rect x="9.2" y="0" width="1" height="1" fill="#6a6a6a"/><rect x="11.5" y="0" width="1" height="1" fill="#6a6a6a"/><rect x="1.1" y="2.3" width="1" height="1" fill="#6a6a6a"/><rect x="3.4" y="2.3" width="1" height="1" fill="#6a6a6a"/><rect x="5.7" y="2.3" width="1" height="1" fill="#6a6a6a"/><rect x="8.0" y="2.3" width="1" height="1" fill="#6a6a6a"/><rect x="10.3" y="2.3" width="1" height="1" fill="#6a6a6a"/><rect x="12.6" y="2.3" width="1" height="1" fill="#6a6a6a"/><rect x="0.0" y="4.6" width="1" height="1" fill="#6a6a6a"/><rect x="2.3" y="4.6" width="1" height="1" fill="#6a6a6a"/><rect x="4.6" y="4.6" width="1" height="1" fill="#6a6a6a"/><rect x="6.9" y="4.6" width="1" height="1" fill="#6a6a6a"/><rect x="9.2" y="4.6" width="1" height="1" fill="#6a6a6a"/><rect x="11.5" y="4.6" width="1" height="1" fill="#6a6a6a"/></svg>
<div style="left:148.5px;top:152px;width:9px;height:10px;background:#f0f0f0;border:1px solid #fff;border-right-color:#7a7a7a;border-bottom-color:#7a7a7a;"></div>
<svg style="left:149px;top:153px;" width="8" height="8" viewBox="0 0 8 8"><path d="M4 1v6M1 4h6" stroke="#000" stroke-width="1.300"/></svg>
<div style="left:160.5px;top:152px;width:9px;height:10px;background:#f0f0f0;border:1px solid #fff;border-right-color:#7a7a7a;border-bottom-color:#7a7a7a;"></div>
<svg style="left:161px;top:153px;" width="8" height="8" viewBox="0 0 8 8"><rect x="1" y="3.500" width="3.500" height="3.500" fill="none" stroke="#000" stroke-width="1"/><path d="M4 4l3-3M4.500 .8h2.700v2.700" fill="none" stroke="#000" stroke-width="1"/></svg>
<div style="left:172.5px;top:152px;width:9px;height:10px;background:#f0f0f0;border:1px solid #fff;border-right-color:#7a7a7a;border-bottom-color:#7a7a7a;"></div>
<svg style="left:173px;top:153px;" width="8" height="8" viewBox="0 0 8 8"><path d="M1.200 1.200l5.600 5.600M6.800 1.200l-5.600 5.600" stroke="#000" stroke-width="1.100"/></svg>
<div style="left:0px;top:165px;width:184px;height:12.5px;background:#f0f0f0;border-bottom:1px solid #a8a8a8;border-top:1px solid #fff;"></div>
<span class="s" style="left:9px;top:166.75px;height:12px;line-height:12px;font-size:8.2px;color:#222;">Instance</span>
<div style="left:106px;top:166px;width:1px;height:10.5px;background:#a0a0a0;"></div>
<div style="left:107px;top:166px;width:1px;height:10.5px;background:#fff;"></div>
<span class="s" style="left:108px;top:166.75px;height:12px;line-height:12px;font-size:8.2px;color:#222;">Design unit</span>
<div style="left:157.5px;top:166px;width:1px;height:10.5px;background:#a0a0a0;"></div>
<div style="left:158.5px;top:166px;width:1px;height:10.5px;background:#fff;"></div>
<span class="s" style="left:160px;top:166.75px;height:12px;line-height:12px;font-size:8.2px;color:#222;">Design</span>
<svg style="left:1px;top:168.5px;" width="6" height="6" viewBox="0 0 6 6"><path d="M.3 .5h5.400L3 5.500z" fill="#444"/></svg>
<div style="left:7px;top:166px;width:1px;height:10px;background:#b4b4b4;"></div>
<div style="left:0px;top:177.5px;width:184px;height:145px;background:#fff;"></div>
<div style="left:0px;top:214.3px;width:184px;height:11.5px;background:#bfcddc;"></div>
<div style="left:11px;top:185px;width:4px;height:1px;background:#9a9a9a;"></div>
<div style="left:19.5px;top:190px;width:1px;height:30px;background:#9a9a9a;"></div>
<div style="left:23px;top:196.7px;width:5px;height:1px;background:#9a9a9a;"></div>
<div style="left:19.5px;top:208.3px;width:9px;height:1px;background:#9a9a9a;"></div>
<div style="left:19.5px;top:220px;width:9px;height:1px;background:#9a9a9a;"></div>
<div style="left:11px;top:231.7px;width:4px;height:1px;background:#9a9a9a;"></div>
<svg style="left:2.7px;top:181px;" width="8" height="8" viewBox="0 0 8 8"><rect x=".5" y=".5" width="7" height="7" rx=".8" fill="#f4f6fb" stroke="#8c9ab4" stroke-width=".9"/><path d="M2 4h4" stroke="#111" stroke-width="1"/></svg>
<svg style="left:15px;top:180px;" width="10" height="10" viewBox="0 0 10 10"><rect x=".5" y=".5" width="9" height="9" fill="#10b4ee"/><path d="M.5 .5h9l-1.800 1.500h-5.700v5.700l-1.500 1.800z" fill="#7ae0ff"/><path d="M9.500 .5v9h-9l1.800-1.800h5.400v-5.400z" fill="#0a4f9c"/></svg>
<span class="s" style="left:29.5px;top:180px;height:12px;line-height:12px;font-size:8.2px;color:#222;">tb_alu</span>
<svg style="left:15.2px;top:192.7px;" width="8" height="8" viewBox="0 0 8 8"><rect x=".5" y=".5" width="7" height="7" rx=".8" fill="#f4f6fb" stroke="#8c9ab4" stroke-width=".9"/><path d="M2 4h4" stroke="#111" stroke-width="1"/><path d="M4 2v4" stroke="#111" stroke-width="1"/></svg>
<svg style="left:27px;top:191.7px;" width="10" height="10" viewBox="0 0 10 10"><rect x=".5" y=".5" width="9" height="9" fill="#10b4ee"/><path d="M.5 .5h9l-1.800 1.500h-5.700v5.700l-1.500 1.800z" fill="#7ae0ff"/><path d="M9.500 .5v9h-9l1.800-1.800h5.400v-5.400z" fill="#0a4f9c"/></svg>
<span class="s" style="left:41.5px;top:191.7px;height:12px;line-height:12px;font-size:8.2px;color:#222;">uut</span>
<svg style="left:27px;top:203.3px;" width="10" height="10" viewBox="0 0 10 10"><circle cx="5" cy="5" r="4.700" fill="#1a9fd0"/><circle cx="5" cy="5" r="4.500" fill="none" stroke="#0a5f90" stroke-width=".6"/><ellipse cx="3.800" cy="3.300" rx="2.400" ry="1.700" fill="#a4e8fa"/><path d="M1.500 7.300c2 2.300 5 2.300 7 0" fill="none" stroke="#0a6a98" stroke-width="1"/></svg>
<span class="s" style="left:42px;top:203.3px;height:12px;line-height:12px;font-size:8.2px;color:#222;">#ALWAYS#16</span>
<svg style="left:27px;top:215px;" width="10" height="10" viewBox="0 0 10 10"><circle cx="5" cy="5" r="4.700" fill="#1a9fd0"/><circle cx="5" cy="5" r="4.500" fill="none" stroke="#0a5f90" stroke-width=".6"/><ellipse cx="3.800" cy="3.300" rx="2.400" ry="1.700" fill="#a4e8fa"/><path d="M1.500 7.300c2 2.300 5 2.300 7 0" fill="none" stroke="#0a6a98" stroke-width="1"/></svg>
<span class="s" style="left:42px;top:215px;height:12px;line-height:12px;font-size:8.2px;color:#222;">#INITIAL#18</span>
<svg style="left:2.7px;top:227.7px;" width="8" height="8" viewBox="0 0 8 8"><rect x=".5" y=".5" width="7" height="7" rx=".8" fill="#f4f6fb" stroke="#8c9ab4" stroke-width=".9"/><path d="M2 4h4" stroke="#111" stroke-width="1"/><path d="M4 2v4" stroke="#111" stroke-width="1"/></svg>
<svg style="left:15px;top:226.7px;" width="10" height="10" viewBox="0 0 10 10"><rect x=".5" y=".5" width="9" height="9" fill="#10b4ee"/><path d="M.5 .5h9l-1.800 1.500h-5.700v5.700l-1.500 1.800z" fill="#7ae0ff"/><path d="M9.500 .5v9h-9l1.800-1.800h5.400v-5.400z" fill="#0a4f9c"/></svg>
<span class="s" style="left:29.5px;top:226.7px;height:12px;line-height:12px;font-size:8.2px;color:#222;">std</span>
<svg style="left:13.5px;top:237.3px;" width="12" height="12" viewBox="0 0 12 12"><path d="M1 0v11h10.500" fill="none" stroke="#2a4ad8" stroke-width="1"/><path d="M2 9c3-2 6-2 9 1" fill="none" stroke="#18a838" stroke-width="1.200"/><path d="M2.500 7l3-4.500 2.500 3 3-4" fill="none" stroke="#d82828" stroke-width="1.100"/><circle cx="6" cy="3" r="1.800" fill="none" stroke="#18a8c8" stroke-width=".9"/></svg>
<span class="s" style="left:30px;top:238.3px;height:12px;line-height:12px;font-size:8.2px;color:#222;">#vsim_capacity#</span>
<span class="s" style="left:108px;top:180px;height:12px;line-height:12px;font-size:8.2px;color:#222;">tb_alu(fast)</span>
<span class="s" style="left:159.5px;top:180px;height:12px;line-height:12px;font-size:8.2px;color:#222;width:24px;overflow:hidden;">Module</span>
<span class="s" style="left:108px;top:191.7px;height:12px;line-height:12px;font-size:8.2px;color:#222;">alu_top(fast)</span>
<span class="s" style="left:159.5px;top:191.7px;height:12px;line-height:12px;font-size:8.2px;color:#222;width:24px;overflow:hidden;">Module</span>
<span class="s" style="left:108px;top:203.3px;height:12px;line-height:12px;font-size:8.2px;color:#222;">tb_alu(fast)</span>
<span class="s" style="left:159.5px;top:203.3px;height:12px;line-height:12px;font-size:8.2px;color:#222;width:24px;overflow:hidden;">Process</span>
<span class="s" style="left:108px;top:215px;height:12px;line-height:12px;font-size:8.2px;color:#222;">tb_alu(fast)</span>
<span class="s" style="left:159.5px;top:215px;height:12px;line-height:12px;font-size:8.2px;color:#222;width:24px;overflow:hidden;">Process</span>
<span class="s" style="left:108px;top:226.7px;height:12px;line-height:12px;font-size:8.2px;color:#222;">std</span>
<span class="s" style="left:159.5px;top:226.7px;height:12px;line-height:12px;font-size:8.2px;color:#222;width:24px;overflow:hidden;">VlPackage</span>
<span class="s" style="left:159.5px;top:238.3px;height:12px;line-height:12px;font-size:8.2px;color:#222;width:24px;overflow:hidden;">Capacity</span>
<div style="left:0px;top:324px;width:184px;height:11.5px;background:#f4f4f4;"></div>
<div style="left:10px;top:324.5px;width:65.5px;height:10.5px;background:#f0f0f0;border:1px solid #fff;border-right-color:#9a9a9a;border-bottom-color:#9a9a9a;"></div>
<svg style="left:2px;top:327.5px;" width="5" height="6" viewBox="0 0 5 6"><path d="M4 0v5L.5 2.500z" fill="#000"/></svg>
<div style="left:172.5px;top:324.5px;width:11.5px;height:10.5px;background:#f0f0f0;border:1px solid #fff;border-right-color:#9a9a9a;border-bottom-color:#9a9a9a;"></div>
<svg style="left:176px;top:327.5px;" width="5" height="6" viewBox="0 0 5 6"><path d="M1 0v5l3.500-2.500z" fill="#000"/></svg>
<div style="left:0px;top:336px;width:184px;height:18px;background:#f0f0f0;"></div>
<div style="left:0px;top:336.2px;width:184px;height:1.4px;background:#6e6e6e;"></div>
<div style="left:0px;top:338px;width:53px;height:14.5px;background:#dcdcdc;border:1px solid #5a5a5a;border-top-color:#6a6a6a;border-radius:0 0 2px 2px;"></div>
<svg style="left:2px;top:339px;" width="10" height="12" viewBox="0 0 10 12"><rect x="0" y="3" width="2.500" height="8" fill="#2a8a3a"/><rect x="3" y="1" width="2.500" height="10" fill="#1a3a8a"/><rect x="6" y="2.500" width="2.500" height="8.500" fill="#b83a2a"/><path d="M0 11.500h10" stroke="#222" stroke-width="1"/></svg>
<span class="s" style="left:15px;top:339.45px;height:12px;line-height:12px;font-size:8.2px;color:#222;">Library</span>
<svg style="left:44px;top:341.95px;" width="6" height="6" viewBox="0 0 6 6"><path d="M.5 .5l5 5M5.500 .5l-5 5" stroke="#b0b0b0" stroke-width="1.400"/></svg>
<div style="left:54px;top:338px;width:56px;height:14.5px;background:#dcdcdc;border:1px solid #5a5a5a;border-top-color:#6a6a6a;border-radius:0 0 2px 2px;"></div>
<svg style="left:57px;top:339px;" width="11" height="12" viewBox="0 0 11 12"><rect x=".5" y="2.500" width="10" height="8.500" fill="#fff" stroke="#222" stroke-width=".9"/><path d="M2 .5v3M5.500 .5v3M9 .5v3" stroke="#2a3ad8" stroke-width="1" stroke-dasharray="1 .6"/><path d="M2.500 6h2v3h-2zM6.500 6h2v3h-2z" fill="#2a3ad8"/></svg>
<span class="s" style="left:71px;top:339.45px;height:12px;line-height:12px;font-size:8.2px;color:#222;">Project</span>
<svg style="left:101px;top:341.95px;" width="6" height="6" viewBox="0 0 6 6"><path d="M.5 .5l5 5M5.500 .5l-5 5" stroke="#b0b0b0" stroke-width="1.400"/></svg>
<div style="left:111px;top:337px;width:43px;height:15.5px;background:#f4f4f4;border:1px solid #5a5a5a;border-top-color:#f4f4f4;border-radius:0 0 2px 2px;"></div>
<svg style="left:114px;top:339px;" width="12" height="12" viewBox="0 0 12 12"><path d="M3.500 7.500l1.500-7h5l1.500 7z" fill="#eef" stroke="#333" stroke-width=".9"/><path d="M5.500 2.500h3.500M5.200 4.500h4" stroke="#6a7ad8" stroke-width=".7"/><path d="M1 .5l2 7" stroke="#333" stroke-width="1"/><circle cx="3" cy="10" r="1.900" fill="#c01818"/><circle cx="10" cy="10" r="1.900" fill="#c01818"/></svg>
<span class="s" style="left:129px;top:338.95px;height:12px;line-height:12px;font-size:8.2px;color:#222;">sim</span>
<svg style="left:144px;top:341.45px;" width="6" height="6" viewBox="0 0 6 6"><path d="M.5 .5l5 5M5.500 .5l-5 5" stroke="#b0b0b0" stroke-width="1.400"/></svg>
<div style="left:154px;top:338px;width:15px;height:14px;background:#fff;"></div>
<div style="left:169px;top:339px;width:7px;height:11px;background:#f0f0f0;border:1px solid #fff;border-right-color:#8a8a8a;border-bottom-color:#8a8a8a;"></div>
<div style="left:177px;top:339px;width:7px;height:11px;background:#f0f0f0;border:1px solid #fff;border-right-color:#8a8a8a;border-bottom-color:#8a8a8a;"></div>
<svg style="left:170.5px;top:342px;" width="4" height="5" viewBox="0 0 4 5"><path d="M3.500 0v5L.5 2.500z" fill="#8a8a8a"/></svg>
<svg style="left:178.5px;top:342px;" width="4" height="5" viewBox="0 0 4 5"><path d="M.5 0v5l3-2.500z" fill="#8a8a8a"/></svg>
<div style="left:184px;top:148px;width:2.5px;height:207px;background:#e6e6e6;"></div>
<div style="left:186.5px;top:148px;width:3px;height:207px;background:#a9a9a9;"></div>
<div style="left:189.5px;top:148px;width:2.5px;height:207px;background:#ececec;"></div>
<div style="left:744.5px;top:148px;width:4.5px;height:140px;background:#f3f3f3;"></div>
<div style="left:749px;top:148px;width:2.3px;height:140px;background:#bdbdbd;"></div>
<div style="left:751.3px;top:148px;width:2.3px;height:140px;background:#f0f0f0;"></div>
<svg style="left:754px;top:151.8px;" width="12" height="12" viewBox="0 0 12 12"><circle cx="6" cy="6" r="4.300" fill="none" stroke="#4f6c9c" stroke-width="2.400" stroke-dasharray="1.700 1.680"/><circle cx="6" cy="6" r="3.600" fill="#6f8fc4" stroke="#4f6c9c" stroke-width=".8"/><circle cx="6" cy="6" r="1.700" fill="#e4ecf8" stroke="#4f6c9c" stroke-width=".6"/></svg>
<span class="s" style="left:767.5px;top:152.6px;height:12px;line-height:12px;font-size:7.9px;color:#222;">Processes (Active)</span>
<div style="left:837px;top:155.6px;width:21.5px;height:1px;background:#9c9c9c;"></div>
<div style="left:837px;top:156.6px;width:21.5px;height:1px;background:#fbfbfb;"></div>
<div style="left:837px;top:159.5px;width:21.5px;height:1px;background:#9c9c9c;"></div>
<div style="left:837px;top:160.5px;width:21.5px;height:1px;background:#fbfbfb;"></div>
<div style="left:874.5px;top:155.6px;width:21.5px;height:1px;background:#9c9c9c;"></div>
<div style="left:874.5px;top:156.6px;width:21.5px;height:1px;background:#fbfbfb;"></div>
<div style="left:874.5px;top:159.5px;width:21.5px;height:1px;background:#9c9c9c;"></div>
<div style="left:874.5px;top:160.5px;width:21.5px;height:1px;background:#fbfbfb;"></div>
<div style="left:896px;top:155.6px;width:1px;height:5px;background:#9c9c9c;"></div>
<svg style="left:860.5px;top:155.1px;" width="14" height="6" viewBox="0 0 14 6"><rect x="0.0" y="0" width="1" height="1" fill="#6a6a6a"/><rect x="2.3" y="0" width="1" height="1" fill="#6a6a6a"/><rect x="4.6" y="0" width="1" height="1" fill="#6a6a6a"/><rect x="6.9" y="0" width="1" height="1" fill="#6a6a6a"/><rect x="9.2" y="0" width="1" height="1" fill="#6a6a6a"/><rect x="11.5" y="0" width="1" height="1" fill="#6a6a6a"/><rect x="1.1" y="2.3" width="1" height="1" fill="#6a6a6a"/><rect x="3.4" y="2.3" width="1" height="1" fill="#6a6a6a"/><rect x="5.7" y="2.3" width="1" height="1" fill="#6a6a6a"/><rect x="8.0" y="2.3" width="1" height="1" fill="#6a6a6a"/><rect x="10.3" y="2.3" width="1" height="1" fill="#6a6a6a"/><rect x="12.6" y="2.3" width="1" height="1" fill="#6a6a6a"/><rect x="0.0" y="4.6" width="1" height="1" fill="#6a6a6a"/><rect x="2.3" y="4.6" width="1" height="1" fill="#6a6a6a"/><rect x="4.6" y="4.6" width="1" height="1" fill="#6a6a6a"/><rect x="6.9" y="4.6" width="1" height="1" fill="#6a6a6a"/><rect x="9.2" y="4.6" width="1" height="1" fill="#6a6a6a"/><rect x="11.5" y="4.6" width="1" height="1" fill="#6a6a6a"/></svg>
<div style="left:899.5px;top:152.5px;width:9px;height:10px;background:#f0f0f0;border:1px solid #fff;border-right-color:#7a7a7a;border-bottom-color:#7a7a7a;"></div>
<svg style="left:900px;top:153.5px;" width="8" height="8" viewBox="0 0 8 8"><path d="M4 1v6M1 4h6" stroke="#000" stroke-width="1.300"/></svg>
<div style="left:911.5px;top:152.5px;width:9px;height:10px;background:#f0f0f0;border:1px solid #fff;border-right-color:#7a7a7a;border-bottom-color:#7a7a7a;"></div>
<svg style="left:912px;top:153.5px;" width="8" height="8" viewBox="0 0 8 8"><rect x="1" y="3.500" width="3.500" height="3.500" fill="none" stroke="#000" stroke-width="1"/><path d="M4 4l3-3M4.500 .8h2.700v2.700" fill="none" stroke="#000" stroke-width="1"/></svg>
<div style="left:923.5px;top:152.5px;width:9px;height:10px;background:#f0f0f0;border:1px solid #fff;border-right-color:#7a7a7a;border-bottom-color:#7a7a7a;"></div>
<svg style="left:924px;top:153.5px;" width="8" height="8" viewBox="0 0 8 8"><path d="M1.200 1.200l5.600 5.600M6.800 1.200l-5.600 5.600" stroke="#000" stroke-width="1.100"/></svg>
<div style="left:753.5px;top:165px;width:172px;height:12.5px;background:#f0f0f0;border-bottom:1px solid #a8a8a8;border-top:1px solid #fff;"></div>
<span class="s" style="left:763.5px;top:166.75px;height:12px;line-height:12px;font-size:8.2px;color:#222;">Name</span>
<div style="left:860.5px;top:166px;width:1px;height:10.5px;background:#a0a0a0;"></div>
<div style="left:861.5px;top:166px;width:1px;height:10.5px;background:#fff;"></div>
<span class="s" style="left:862.5px;top:166.75px;height:12px;line-height:12px;font-size:8.2px;color:#222;">Type (filtered)</span>
<svg style="left:755px;top:168.5px;" width="6" height="6" viewBox="0 0 6 6"><path d="M.3 .5h5.400L3 5.500z" fill="#444"/></svg>
<div style="left:762px;top:166px;width:1px;height:10px;background:#b4b4b4;"></div>
<div style="left:753.5px;top:177.5px;width:172px;height:112px;background:#8aa0fb;"></div>
<div style="left:753.5px;top:179px;width:172px;height:11.5px;background:#c0cfde;"></div>
<svg style="left:768.5px;top:179.5px;" width="10" height="10" viewBox="0 0 10 10"><circle cx="5" cy="5" r="4.700" fill="#1a9fd0"/><circle cx="5" cy="5" r="4.500" fill="none" stroke="#0a5f90" stroke-width=".6"/><ellipse cx="3.800" cy="3.300" rx="2.400" ry="1.700" fill="#a4e8fa"/><path d="M1.500 7.300c2 2.300 5 2.300 7 0" fill="none" stroke="#0a6a98" stroke-width="1"/></svg>
<span class="s" style="left:783.5px;top:179.5px;height:12px;line-height:12px;font-size:8.2px;color:#222;">#INITIAL#18</span>
<span class="s" style="left:862.5px;top:179.5px;height:12px;line-height:12px;font-size:8.2px;color:#222;">Initial</span>
<svg style="left:768.5px;top:191.5px;" width="10" height="10" viewBox="0 0 10 10"><circle cx="5" cy="5" r="4.700" fill="#1a9fd0"/><circle cx="5" cy="5" r="4.500" fill="none" stroke="#0a5f90" stroke-width=".6"/><ellipse cx="3.800" cy="3.300" rx="2.400" ry="1.700" fill="#a4e8fa"/><path d="M1.500 7.300c2 2.300 5 2.300 7 0" fill="none" stroke="#0a6a98" stroke-width="1"/></svg>
<span class="s" style="left:783.5px;top:191.7px;height:12px;line-height:12px;font-size:8.2px;color:#dfe6ff;">#ALWAYS#16</span>
<span class="s" style="left:862.5px;top:191.7px;height:12px;line-height:12px;font-size:8.2px;color:#dfe6ff;">Always</span>
<svg style="left:193px;top:152px;" width="11" height="11" viewBox="0 0 11 11"><rect x=".5" y=".5" width="10" height="10" fill="#0a0a0a" stroke="#555"/><rect x="0" y="0" width="11" height="2" fill="#333"/><path d="M2 7h2v-2.500h2v2.500h3" fill="none" stroke="#18c838" stroke-width="1"/><path d="M2 4.500h1" stroke="#3a5af0" stroke-width="1"/></svg>
<span class="s" style="left:205.5px;top:152.5px;height:12px;line-height:12px;font-size:8.25px;color:#222;">Wave - Default</span>
<div style="left:264px;top:155.6px;width:214px;height:1px;background:#9c9c9c;"></div>
<div style="left:264px;top:156.6px;width:214px;height:1px;background:#fbfbfb;"></div>
<div style="left:264px;top:159.5px;width:214px;height:1px;background:#9c9c9c;"></div>
<div style="left:264px;top:160.5px;width:214px;height:1px;background:#fbfbfb;"></div>
<div style="left:494px;top:155.6px;width:212px;height:1px;background:#9c9c9c;"></div>
<div style="left:494px;top:156.6px;width:212px;height:1px;background:#fbfbfb;"></div>
<div style="left:494px;top:159.5px;width:212px;height:1px;background:#9c9c9c;"></div>
<div style="left:494px;top:160.5px;width:212px;height:1px;background:#fbfbfb;"></div>
<div style="left:706px;top:155.6px;width:1px;height:5px;background:#9c9c9c;"></div>
<svg style="left:480px;top:155.1px;" width="14" height="6" viewBox="0 0 14 6"><rect x="0.0" y="0" width="1" height="1" fill="#6a6a6a"/><rect x="2.3" y="0" width="1" height="1" fill="#6a6a6a"/><rect x="4.6" y="0" width="1" height="1" fill="#6a6a6a"/><rect x="6.9" y="0" width="1" height="1" fill="#6a6a6a"/><rect x="9.2" y="0" width="1" height="1" fill="#6a6a6a"/><rect x="11.5" y="0" width="1" height="1" fill="#6a6a6a"/><rect x="1.1" y="2.3" width="1" height="1" fill="#6a6a6a"/><rect x="3.4" y="2.3" width="1" height="1" fill="#6a6a6a"/><rect x="5.7" y="2.3" width="1" height="1" fill="#6a6a6a"/><rect x="8.0" y="2.3" width="1" height="1" fill="#6a6a6a"/><rect x="10.3" y="2.3" width="1" height="1" fill="#6a6a6a"/><rect x="12.6" y="2.3" width="1" height="1" fill="#6a6a6a"/><rect x="0.0" y="4.6" width="1" height="1" fill="#6a6a6a"/><rect x="2.3" y="4.6" width="1" height="1" fill="#6a6a6a"/><rect x="4.6" y="4.6" width="1" height="1" fill="#6a6a6a"/><rect x="6.9" y="4.6" width="1" height="1" fill="#6a6a6a"/><rect x="9.2" y="4.6" width="1" height="1" fill="#6a6a6a"/><rect x="11.5" y="4.6" width="1" height="1" fill="#6a6a6a"/></svg>
<div style="left:709.5px;top:152.5px;width:9px;height:10px;background:#f0f0f0;border:1px solid #fff;border-right-color:#7a7a7a;border-bottom-color:#7a7a7a;"></div>
<svg style="left:710px;top:153.5px;" width="8" height="8" viewBox="0 0 8 8"><path d="M4 1v6M1 4h6" stroke="#000" stroke-width="1.300"/></svg>
<div style="left:721.5px;top:152.5px;width:9px;height:10px;background:#f0f0f0;border:1px solid #fff;border-right-color:#7a7a7a;border-bottom-color:#7a7a7a;"></div>
<svg style="left:722px;top:153.5px;" width="8" height="8" viewBox="0 0 8 8"><rect x="1" y="3.500" width="3.500" height="3.500" fill="none" stroke="#000" stroke-width="1"/><path d="M4 4l3-3M4.500 .8h2.700v2.700" fill="none" stroke="#000" stroke-width="1"/></svg>
<div style="left:733.5px;top:152.5px;width:9px;height:10px;background:#f0f0f0;border:1px solid #fff;border-right-color:#7a7a7a;border-bottom-color:#7a7a7a;"></div>
<svg style="left:734px;top:153.5px;" width="8" height="8" viewBox="0 0 8 8"><path d="M1.200 1.200l5.600 5.600M6.800 1.200l-5.600 5.600" stroke="#000" stroke-width="1.100"/></svg>
<div style="left:192px;top:165px;width:553px;height:171px;background:#f0f0f0;"></div>
<div style="left:192px;top:165.4px;width:117px;height:14px;background:#808080;"></div>
<div style="left:310.5px;top:165.4px;width:73.5px;height:14px;background:#808080;"></div>
<div style="left:309px;top:165px;width:1.5px;height:169px;background:#e8e8e8;"></div>
<div style="left:383.8px;top:165px;width:2px;height:153px;background:#d8d8d8;"></div>
<div style="left:192px;top:179.2px;width:553px;height:1.8px;background:#f4f4f4;"></div>
<div style="left:192px;top:180.6px;width:6.5px;height:107px;background:#fff;"></div>
<div style="left:198.5px;top:180.6px;width:110.5px;height:107px;background:#808080;"></div>
<div style="left:310.5px;top:180.6px;width:73.5px;height:107px;background:#808080;"></div>
<svg style="left:199.5px;top:166.5px;" width="13" height="13" viewBox="0 0 13 13"><path d="M3 4l3-3.500 2 1.500-3 3.500z" fill="#c828d8"/><rect x="7" y="4.500" width="5" height="6" fill="#18a048"/><path d="M5 3.500l2-1.500 2.500 2-2 2z" fill="#18d8f0"/><path d="M4.500 5l4 3.500-3.500 4-4-3.500z" fill="#1a5af0"/></svg>
<svg style="left:215px;top:173.5px;" width="4" height="3" viewBox="0 0 4 3"><path d="M0 0h4L2 2.4z" fill="#000"/></svg>
<span class="s" style="right:545px;top:167.4px;height:12px;line-height:12px;font-size:8.2px;color:#f4f4f4;">Msgs</span>
<div style="left:198.5px;top:219.5px;width:110.5px;height:12.5px;background:#000;"></div>
<div style="left:310.5px;top:219.5px;width:73.5px;height:12.5px;background:#000;"></div>
<svg style="left:213.2px;top:183px;" width="11" height="11" viewBox="0 0 11 11"><path d="M5.500 .3l5.200 5.200-5.200 5.200-5.200-5.200z" fill="#22a8e8"/><path d="M5.500 .3l5.200 5.200h-3.200l-2-2.200z" fill="#5ad0ff"/><path d="M5.500 .3l-5.200 5.200h3l2.200-2.200z" fill="#9ae6ff"/><path d="M.3 5.500l5.200 5.200v-3l-2.200-2.200z" fill="#1a80c8"/><path d="M10.700 5.500l-5.200 5.200v-3l2-2.200z" fill="#0a5aa0"/></svg>
<span class="s" style="left:228px;top:183.4px;height:12px;line-height:12px;font-size:8.2px;color:#fff;">/tb_alu/clk</span>
<span class="s" style="left:312.8px;top:183.4px;height:12px;line-height:12px;font-size:8.2px;color:#fff;">1'h0</span>
<svg style="left:213.2px;top:195.4px;" width="11" height="11" viewBox="0 0 11 11"><path d="M5.500 .3l5.200 5.200-5.200 5.200-5.200-5.200z" fill="#22a8e8"/><path d="M5.500 .3l5.200 5.200h-3.200l-2-2.200z" fill="#5ad0ff"/><path d="M5.500 .3l-5.200 5.200h3l2.200-2.200z" fill="#9ae6ff"/><path d="M.3 5.500l5.200 5.200v-3l-2.200-2.200z" fill="#1a80c8"/><path d="M10.700 5.500l-5.200 5.200v-3l2-2.200z" fill="#0a5aa0"/></svg>
<span class="s" style="left:228px;top:195.8px;height:12px;line-height:12px;font-size:8.2px;color:#fff;">/tb_alu/rst</span>
<span class="s" style="left:312.8px;top:195.8px;height:12px;line-height:12px;font-size:8.2px;color:#fff;">1'h0</span>
<svg style="left:213.2px;top:207.9px;" width="11" height="11" viewBox="0 0 11 11"><path d="M5.500 .3l5.200 5.200-5.200 5.200-5.200-5.200z" fill="#22a8e8"/><path d="M5.500 .3l5.200 5.200h-3.200l-2-2.200z" fill="#5ad0ff"/><path d="M5.500 .3l-5.200 5.200h3l2.200-2.200z" fill="#9ae6ff"/><path d="M.3 5.500l5.200 5.200v-3l-2.200-2.200z" fill="#1a80c8"/><path d="M10.700 5.500l-5.200 5.200v-3l2-2.200z" fill="#0a5aa0"/></svg>
<span class="s" style="left:228px;top:208.3px;height:12px;line-height:12px;font-size:8.2px;color:#fff;">/tb_alu/load_a</span>
<span class="s" style="left:312.8px;top:208.3px;height:12px;line-height:12px;font-size:8.2px;color:#fff;">1'h1</span>
<svg style="left:213.2px;top:220.3px;" width="11" height="11" viewBox="0 0 11 11"><path d="M5.500 .3l5.200 5.200-5.200 5.200-5.200-5.200z" fill="#22a8e8"/><path d="M5.500 .3l5.200 5.200h-3.200l-2-2.200z" fill="#5ad0ff"/><path d="M5.500 .3l-5.200 5.200h3l2.200-2.200z" fill="#9ae6ff"/><path d="M.3 5.500l5.200 5.200v-3l-2.200-2.200z" fill="#1a80c8"/><path d="M10.700 5.500l-5.200 5.200v-3l2-2.200z" fill="#0a5aa0"/></svg>
<span class="s" style="left:228px;top:220.7px;height:12px;line-height:12px;font-size:8.2px;color:#fff;">/tb_alu/load_b</span>
<span class="s" style="left:312.8px;top:220.7px;height:12px;line-height:12px;font-size:8.2px;color:#fff;">1'h0</span>
<svg style="left:213.2px;top:232.7px;" width="11" height="11" viewBox="0 0 11 11"><path d="M5.500 .3l5.200 5.200-5.200 5.200-5.200-5.200z" fill="#22a8e8"/><path d="M5.500 .3l5.200 5.200h-3.200l-2-2.200z" fill="#5ad0ff"/><path d="M5.500 .3l-5.200 5.200h3l2.200-2.200z" fill="#9ae6ff"/><path d="M.3 5.500l5.200 5.200v-3l-2.200-2.200z" fill="#1a80c8"/><path d="M10.700 5.500l-5.200 5.200v-3l2-2.200z" fill="#0a5aa0"/></svg>
<span class="s" style="left:228px;top:233.1px;height:12px;line-height:12px;font-size:8.2px;color:#fff;">/tb_alu/op</span>
<span class="s" style="left:312.8px;top:233.1px;height:12px;line-height:12px;font-size:8.2px;color:#fff;">4'h0</span>
<svg style="left:202.5px;top:235px;" width="9" height="8" viewBox="0 0 9 8"><rect x=".5" y=".5" width="6" height="6" fill="#fff" stroke="#555" stroke-width=".8"/><path d="M2 3.500h3M3.500 2v3" stroke="#000" stroke-width=".9"/><path d="M7 3.500h2" stroke="#ddd" stroke-width=".8"/></svg>
<svg style="left:213.2px;top:245.1px;" width="11" height="11" viewBox="0 0 11 11"><path d="M5.500 .3l5.200 5.200-5.200 5.200-5.200-5.200z" fill="#22a8e8"/><path d="M5.500 .3l5.200 5.200h-3.200l-2-2.200z" fill="#5ad0ff"/><path d="M5.500 .3l-5.200 5.200h3l2.200-2.200z" fill="#9ae6ff"/><path d="M.3 5.500l5.200 5.200v-3l-2.200-2.200z" fill="#1a80c8"/><path d="M10.700 5.500l-5.200 5.200v-3l2-2.200z" fill="#0a5aa0"/></svg>
<span class="s" style="left:228px;top:245.5px;height:12px;line-height:12px;font-size:8.2px;color:#fff;">/tb_alu/data_in</span>
<span class="s" style="left:312.8px;top:245.5px;height:12px;line-height:12px;font-size:8.2px;color:#fff;">8'h08</span>
<svg style="left:202.5px;top:247.4px;" width="9" height="8" viewBox="0 0 9 8"><rect x=".5" y=".5" width="6" height="6" fill="#fff" stroke="#555" stroke-width=".8"/><path d="M2 3.500h3M3.500 2v3" stroke="#000" stroke-width=".9"/><path d="M7 3.500h2" stroke="#ddd" stroke-width=".8"/></svg>
<svg style="left:213.2px;top:257.5px;" width="11" height="11" viewBox="0 0 11 11"><path d="M5.500 .3l5.200 5.200-5.200 5.200-5.200-5.200z" fill="#22a8e8"/><path d="M5.500 .3l5.200 5.200h-3.200l-2-2.200z" fill="#5ad0ff"/><path d="M5.500 .3l-5.200 5.200h3l2.200-2.200z" fill="#9ae6ff"/><path d="M.3 5.500l5.200 5.200v-3l-2.200-2.200z" fill="#1a80c8"/><path d="M10.700 5.500l-5.200 5.200v-3l2-2.200z" fill="#0a5aa0"/></svg>
<span class="s" style="left:228px;top:257.9px;height:12px;line-height:12px;font-size:8.2px;color:#fff;">/tb_alu/result</span>
<span class="s" style="left:312.8px;top:257.9px;height:12px;line-height:12px;font-size:8.2px;color:#fff;">8'h00</span>
<svg style="left:202.5px;top:259.8px;" width="9" height="8" viewBox="0 0 9 8"><rect x=".5" y=".5" width="6" height="6" fill="#fff" stroke="#555" stroke-width=".8"/><path d="M2 3.500h3M3.500 2v3" stroke="#000" stroke-width=".9"/><path d="M7 3.500h2" stroke="#ddd" stroke-width=".8"/></svg>
<svg style="left:213.2px;top:269.9px;" width="11" height="11" viewBox="0 0 11 11"><path d="M5.500 .3l5.200 5.200-5.200 5.200-5.200-5.200z" fill="#22a8e8"/><path d="M5.500 .3l5.200 5.200h-3.200l-2-2.200z" fill="#5ad0ff"/><path d="M5.500 .3l-5.200 5.200h3l2.200-2.200z" fill="#9ae6ff"/><path d="M.3 5.500l5.200 5.200v-3l-2.200-2.200z" fill="#1a80c8"/><path d="M10.700 5.500l-5.200 5.200v-3l2-2.200z" fill="#0a5aa0"/></svg>
<span class="s" style="left:228px;top:270.3px;height:12px;line-height:12px;font-size:8.2px;color:#fff;">/tb_alu/zero</span>
<span class="s" style="left:312.8px;top:270.3px;height:12px;line-height:12px;font-size:8.2px;color:#fff;">1'h1</span>
<div style="left:199px;top:282px;width:106px;height:1px;background:#111;"></div>
<div style="left:313px;top:282px;width:68px;height:1px;background:#111;"></div>
<svg style="left:198.5px;top:279.5px;" width="3" height="6" viewBox="0 0 3 6"><path d="M0 0l2.500 2.500L0 5z" fill="none" stroke="#111" stroke-width=".7"/></svg>
<div style="left:192px;top:287.7px;width:553px;height:2px;background:#e8e8e8;"></div>
<div style="left:192px;top:289.7px;width:117px;height:29px;background:#808080;"></div>
<div style="left:310.5px;top:289.7px;width:73.5px;height:29px;background:#808080;"></div>
<div style="left:227.5px;top:304.8px;width:81.5px;height:13.4px;background:#fff;"></div>
<div style="left:310.5px;top:304.8px;width:73.5px;height:13.4px;background:#fff;"></div>
<span class="s" style="right:623.5px;top:292px;height:12px;line-height:12px;font-size:8.2px;color:#fff;">Now</span>
<span class="s" style="right:548.5px;top:292px;height:12px;line-height:12px;font-size:8.2px;color:#fff;">70000 ps</span>
<span class="s" style="right:623.5px;top:306.5px;height:12px;line-height:12px;font-size:8.2px;color:#111;">Cursor 1</span>
<span class="s" style="right:548.5px;top:306.5px;height:12px;line-height:12px;font-size:8.2px;color:#111;">13420 ps</span>
<svg style="left:199px;top:292px;" width="27" height="11" viewBox="0 0 27 11"><path d="M1 7.500h5.500M2 7l1-3.500 2 1 1-2" fill="none" stroke="#c0c4d0" stroke-width="1"/><rect x="8" y="2" width="7.500" height="6" fill="#8ab0e8" stroke="#d0d8f0" stroke-width=".7"/><path d="M10 9.500h4" stroke="#5a7ab8" stroke-width="1"/><circle cx="21.500" cy="5.500" r="3.600" fill="#6ac85a" stroke="#c8f0c0" stroke-width=".8"/><path d="M19.500 5.500h4M21.500 3.500v4" stroke="#fff" stroke-width="1"/></svg>
<svg style="left:200px;top:306px;" width="27" height="12" viewBox="0 0 27 12"><rect x="1" y="5.500" width="6.500" height="5.500" fill="#f0b838" stroke="#a87808" stroke-width=".6"/><path d="M2.500 5.500v-2c0-2 3.500-2 3.500 0" fill="none" stroke="#e8c878" stroke-width="1.100"/><path d="M10 10.500l5-6" stroke="#5a8ad8" stroke-width="1.800"/><circle cx="15.500" cy="3.500" r="1.800" fill="#8ab0e8"/><circle cx="22.500" cy="6" r="3.800" fill="#e85a50" stroke="#f8b0a8" stroke-width=".7"/><path d="M20.500 6h4" stroke="#fff" stroke-width="1.200"/></svg>
<div style="left:192px;top:318.5px;width:553px;height:2px;background:#ececec;"></div>
<div style="left:192px;top:320.3px;width:117px;height:13.7px;background:#808080;"></div>
<div style="left:310.5px;top:320.3px;width:73.5px;height:13.7px;background:#808080;"></div>
<div style="left:199px;top:321.3px;width:109px;height:11px;background:#f0f0f0;"></div>
<div style="left:200px;top:322.3px;width:10px;height:9px;background:#f0f0f0;border:1px solid #fff;border-right-color:#8a8a8a;border-bottom-color:#8a8a8a;"></div>
<svg style="left:203px;top:324.3px;" width="4" height="5" viewBox="0 0 4 5"><path d="M3.500 0v5L.3 2.500z" fill="#8a8a8a"/></svg>
<div style="left:297px;top:322.3px;width:10px;height:9px;background:#f0f0f0;border:1px solid #fff;border-right-color:#8a8a8a;border-bottom-color:#8a8a8a;"></div>
<svg style="left:300px;top:324.3px;" width="4" height="5" viewBox="0 0 4 5"><path d="M.5 0v5l3.200-2.500z" fill="#8a8a8a"/></svg>
<div style="left:210.5px;top:322.3px;width:86px;height:9px;background:#f4f4f4;border:1px solid #fff;border-right-color:#b0b0b0;border-bottom-color:#b0b0b0;"></div>
<div style="left:311.5px;top:321.3px;width:71.5px;height:11px;background:#f0f0f0;"></div>
<div style="left:312.5px;top:322.3px;width:10px;height:9px;background:#f0f0f0;border:1px solid #fff;border-right-color:#8a8a8a;border-bottom-color:#8a8a8a;"></div>
<svg style="left:315.5px;top:324.3px;" width="4" height="5" viewBox="0 0 4 5"><path d="M3.500 0v5L.3 2.500z" fill="#8a8a8a"/></svg>
<div style="left:372px;top:322.3px;width:10px;height:9px;background:#f0f0f0;border:1px solid #fff;border-right-color:#8a8a8a;border-bottom-color:#8a8a8a;"></div>
<svg style="left:375px;top:324.3px;" width="4" height="5" viewBox="0 0 4 5"><path d="M.5 0v5l3.200-2.500z" fill="#8a8a8a"/></svg>
<div style="left:323px;top:322.3px;width:48.5px;height:9px;background:#f4f4f4;border:1px solid #fff;border-right-color:#b0b0b0;border-bottom-color:#b0b0b0;"></div>
<div style="left:386.5px;top:320.5px;width:360px;height:12.5px;background:#f0f0f0;"></div>
<div style="left:387.5px;top:321.5px;width:10px;height:10.5px;background:#f0f0f0;border:1px solid #fff;border-right-color:#8a8a8a;border-bottom-color:#8a8a8a;"></div>
<svg style="left:390.5px;top:324.25px;" width="4" height="5" viewBox="0 0 4 5"><path d="M3.500 0v5L.3 2.500z" fill="#000"/></svg>
<div style="left:398px;top:321.5px;width:340px;height:10.5px;background:#f0f0f0;border:1px solid #fff;border-right-color:#a0a0a0;border-bottom-color:#a0a0a0;"></div>
<div style="left:458px;top:322.5px;width:1px;height:8.5px;background:#e8c818;"></div>
<div style="left:192px;top:333px;width:553px;height:3px;background:#ececec;"></div>
<div style="left:192px;top:335.8px;width:553px;height:2px;background:#808080;"></div>
<div style="left:386px;top:165.4px;width:343.8px;height:13.8px;background:#000;"></div>
<div style="left:386px;top:180.6px;width:343.8px;height:107px;background:#000;"></div>
<div style="left:386px;top:289.7px;width:343.8px;height:28.5px;background:#000;"></div>
<svg style="left:386px;top:180px;" width="343.8" height="108" viewBox="0 0 343.8 108"><path d="M46.7 0.6v107" stroke="#4c4c4c" stroke-width="1"/><path d="M91.0 0.6v107" stroke="#4c4c4c" stroke-width="1"/><path d="M135.2 0.6v107" stroke="#4c4c4c" stroke-width="1"/><path d="M179.4 0.6v107" stroke="#4c4c4c" stroke-width="1"/><path d="M223.6 0.6v107" stroke="#4c4c4c" stroke-width="1"/><path d="M267.8 0.6v107" stroke="#4c4c4c" stroke-width="1"/><path d="M312.0 0.6v107" stroke="#4c4c4c" stroke-width="1"/><polyline points="3.0,8.7 3.0,13.2 46.7,13.2 46.7,4.3 91.0,4.3 91.0,13.2 135.2,13.2 135.2,4.3 179.4,4.3 179.4,13.2 223.6,13.2 223.6,4.3 267.8,4.3 267.8,13.2 312.0,13.2 312.0,4.3 340.0,4.3" fill="none" stroke="#36c81a" stroke-width="1"/><polyline points="3.0,21.0 3.0,16.5 91.0,16.5 91.0,25.3 340.0,25.3" fill="none" stroke="#36c81a" stroke-width="1"/><polyline points="3.0,33.2 3.0,37.7 91.0,37.7 91.0,29.2 179.4,29.2 179.4,37.7 340.0,37.7" fill="none" stroke="#36c81a" stroke-width="1"/><polyline points="3.0,45.9 3.0,50.4 179.4,50.4 179.4,41.3 267.8,41.3 267.8,50.4 340.0,50.4" fill="none" stroke="#36c81a" stroke-width="1"/><path d="M3 90.5v3" stroke="#c81818" stroke-width="1"/><polyline points="3.0,91.2 135.2,91.2 135.2,100.2 340.0,100.2" fill="none" stroke="#36c81a" stroke-width="1"/><path d="M340.0 54.6H4.5q-1.5 0 -1.5 1.5V61.4q0 1.5 1.5 1.5H340.0" fill="none" stroke="#78a676" stroke-width="1"/><path d="M91.0 67.0H4.5q-1.5 0 -1.5 1.5V73.8q0 1.5 1.5 1.5H91.0" fill="none" stroke="#78a676" stroke-width="1"/><path d="M91.0 67.0H179.4M91.0 75.3H179.4" fill="none" stroke="#78a676" stroke-width="1"/><path d="M179.4 67.0H340.0M179.4 75.3H340.0" fill="none" stroke="#78a676" stroke-width="1"/><path d="M89.5 67.0L92.0 75.3M89.5 75.3L92.0 67.0" stroke="#a8d0a4" stroke-width="1"/><path d="M177.9 67.0L180.4 75.3M177.9 75.3L180.4 67.0" stroke="#a8d0a4" stroke-width="1"/><path d="M135.2 79.4H4.5q-1.5 0 -1.5 1.5V86.2q0 1.5 1.5 1.5H135.2" fill="none" stroke="#78a676" stroke-width="1"/><path d="M135.2 79.4H223.6M135.2 87.7H223.6" fill="none" stroke="#78a676" stroke-width="1"/><path d="M223.6 79.4H340.0M223.6 87.7H340.0" fill="none" stroke="#78a676" stroke-width="1"/><path d="M133.7 79.4L136.2 87.7M133.7 87.7L136.2 79.4" stroke="#a8d0a4" stroke-width="1"/><path d="M222.1 79.4L224.6 87.7M222.1 87.7L224.6 79.4" stroke="#a8d0a4" stroke-width="1"/></svg>
<span class="s" style="left:391.6px;top:234px;height:12px;line-height:12px;font-size:8.2px;color:#f4f4f4;">0</span>
<span class="s" style="left:391.6px;top:246.4px;height:12px;line-height:12px;font-size:8.2px;color:#f4f4f4;">00</span>
<span class="s" style="left:480px;top:246.4px;height:12px;line-height:12px;font-size:8.2px;color:#f4f4f4;">08</span>
<span class="s" style="left:568.4px;top:246.4px;height:12px;line-height:12px;font-size:8.2px;color:#f4f4f4;">03</span>
<span class="s" style="left:391.6px;top:258.8px;height:12px;line-height:12px;font-size:8.2px;color:#f4f4f4;">00</span>
<span class="s" style="left:524.2px;top:258.8px;height:12px;line-height:12px;font-size:8.2px;color:#f4f4f4;">08</span>
<span class="s" style="left:612.6px;top:258.8px;height:12px;line-height:12px;font-size:8.2px;color:#f4f4f4;">0b</span>
<svg style="left:386px;top:289.7px;" width="343.8" height="28.5" viewBox="0 0 343.8 28.5"><path d="M3.0 0V5.100" stroke="#36c81a" stroke-width="1"/><path d="M7.4 1.8V5.100" stroke="#36c81a" stroke-width="1"/><path d="M11.8 1.8V5.100" stroke="#36c81a" stroke-width="1"/><path d="M16.3 1.8V5.100" stroke="#36c81a" stroke-width="1"/><path d="M20.7 1.8V5.100" stroke="#36c81a" stroke-width="1"/><path d="M25.1 1.8V5.100" stroke="#36c81a" stroke-width="1"/><path d="M29.5 1.8V5.100" stroke="#36c81a" stroke-width="1"/><path d="M33.9 1.8V5.100" stroke="#36c81a" stroke-width="1"/><path d="M38.4 1.8V5.100" stroke="#36c81a" stroke-width="1"/><path d="M42.8 1.8V5.100" stroke="#36c81a" stroke-width="1"/><path d="M47.2 0V5.100" stroke="#36c81a" stroke-width="1"/><path d="M51.6 1.8V5.100" stroke="#36c81a" stroke-width="1"/><path d="M56.0 1.8V5.100" stroke="#36c81a" stroke-width="1"/><path d="M60.5 1.8V5.100" stroke="#36c81a" stroke-width="1"/><path d="M64.9 1.8V5.100" stroke="#36c81a" stroke-width="1"/><path d="M69.3 1.8V5.100" stroke="#36c81a" stroke-width="1"/><path d="M73.7 1.8V5.100" stroke="#36c81a" stroke-width="1"/><path d="M78.1 1.8V5.100" stroke="#36c81a" stroke-width="1"/><path d="M82.6 1.8V5.100" stroke="#36c81a" stroke-width="1"/><path d="M87.0 1.8V5.100" stroke="#36c81a" stroke-width="1"/><path d="M91.4 0V5.100" stroke="#36c81a" stroke-width="1"/><path d="M95.8 1.8V5.100" stroke="#36c81a" stroke-width="1"/><path d="M100.2 1.8V5.100" stroke="#36c81a" stroke-width="1"/><path d="M104.7 1.8V5.100" stroke="#36c81a" stroke-width="1"/><path d="M109.1 1.8V5.100" stroke="#36c81a" stroke-width="1"/><path d="M113.5 1.8V5.100" stroke="#36c81a" stroke-width="1"/><path d="M117.9 1.8V5.100" stroke="#36c81a" stroke-width="1"/><path d="M122.3 1.8V5.100" stroke="#36c81a" stroke-width="1"/><path d="M126.8 1.8V5.100" stroke="#36c81a" stroke-width="1"/><path d="M131.2 1.8V5.100" stroke="#36c81a" stroke-width="1"/><path d="M135.6 0V5.100" stroke="#36c81a" stroke-width="1"/><path d="M140.0 1.8V5.100" stroke="#36c81a" stroke-width="1"/><path d="M144.4 1.8V5.100" stroke="#36c81a" stroke-width="1"/><path d="M148.9 1.8V5.100" stroke="#36c81a" stroke-width="1"/><path d="M153.3 1.8V5.100" stroke="#36c81a" stroke-width="1"/><path d="M157.7 1.8V5.100" stroke="#36c81a" stroke-width="1"/><path d="M162.1 1.8V5.100" stroke="#36c81a" stroke-width="1"/><path d="M166.5 1.8V5.100" stroke="#36c81a" stroke-width="1"/><path d="M171.0 1.8V5.100" stroke="#36c81a" stroke-width="1"/><path d="M175.4 1.8V5.100" stroke="#36c81a" stroke-width="1"/><path d="M179.8 0V5.100" stroke="#36c81a" stroke-width="1"/><path d="M184.2 1.8V5.100" stroke="#36c81a" stroke-width="1"/><path d="M188.6 1.8V5.100" stroke="#36c81a" stroke-width="1"/><path d="M193.1 1.8V5.100" stroke="#36c81a" stroke-width="1"/><path d="M197.5 1.8V5.100" stroke="#36c81a" stroke-width="1"/><path d="M201.9 1.8V5.100" stroke="#36c81a" stroke-width="1"/><path d="M206.3 1.8V5.100" stroke="#36c81a" stroke-width="1"/><path d="M210.7 1.8V5.100" stroke="#36c81a" stroke-width="1"/><path d="M215.2 1.8V5.100" stroke="#36c81a" stroke-width="1"/><path d="M219.6 1.8V5.100" stroke="#36c81a" stroke-width="1"/><path d="M224.0 0V5.100" stroke="#36c81a" stroke-width="1"/><path d="M228.4 1.8V5.100" stroke="#36c81a" stroke-width="1"/><path d="M232.8 1.8V5.100" stroke="#36c81a" stroke-width="1"/><path d="M237.3 1.8V5.100" stroke="#36c81a" stroke-width="1"/><path d="M241.7 1.8V5.100" stroke="#36c81a" stroke-width="1"/><path d="M246.1 1.8V5.100" stroke="#36c81a" stroke-width="1"/><path d="M250.5 1.8V5.100" stroke="#36c81a" stroke-width="1"/><path d="M254.9 1.8V5.100" stroke="#36c81a" stroke-width="1"/><path d="M259.4 1.8V5.100" stroke="#36c81a" stroke-width="1"/><path d="M263.8 1.8V5.100" stroke="#36c81a" stroke-width="1"/><path d="M268.2 0V5.100" stroke="#36c81a" stroke-width="1"/><path d="M272.6 1.8V5.100" stroke="#36c81a" stroke-width="1"/><path d="M277.0 1.8V5.100" stroke="#36c81a" stroke-width="1"/><path d="M281.5 1.8V5.100" stroke="#36c81a" stroke-width="1"/><path d="M285.9 1.8V5.100" stroke="#36c81a" stroke-width="1"/><path d="M290.3 1.8V5.100" stroke="#36c81a" stroke-width="1"/><path d="M294.7 1.8V5.100" stroke="#36c81a" stroke-width="1"/><path d="M299.1 1.8V5.100" stroke="#36c81a" stroke-width="1"/><path d="M303.6 1.8V5.100" stroke="#36c81a" stroke-width="1"/><path d="M308.0 1.8V5.100" stroke="#36c81a" stroke-width="1"/><path d="M312.4 0V5.100" stroke="#36c81a" stroke-width="1"/><path d="M316.8 1.8V5.100" stroke="#36c81a" stroke-width="1"/><path d="M321.2 1.8V5.100" stroke="#36c81a" stroke-width="1"/><path d="M325.7 1.8V5.100" stroke="#36c81a" stroke-width="1"/><path d="M330.1 1.8V5.100" stroke="#36c81a" stroke-width="1"/><path d="M334.5 1.8V5.100" stroke="#36c81a" stroke-width="1"/><path d="M338.9 1.8V5.100" stroke="#36c81a" stroke-width="1"/><path d="M3 16H340" stroke="#4a4a4a" stroke-width="1"/></svg>
<span class="s" style="left:437px;top:295.5px;height:12px;line-height:12px;font-size:8.2px;color:#36c81a;width:80px;text-align:center;">10000 ps</span>
<span class="s" style="left:525.4px;top:295.5px;height:12px;line-height:12px;font-size:8.2px;color:#36c81a;width:80px;text-align:center;">20000 ps</span>
<span class="s" style="left:613.8px;top:295.5px;height:12px;line-height:12px;font-size:8.2px;color:#36c81a;width:80px;text-align:center;">30000 ps</span>
<span class="s" style="left:387.5px;top:295.5px;height:12px;line-height:12px;font-size:8.2px;color:#36c81a;">ps</span>
<div style="left:505.8px;top:165px;width:2px;height:14px;background:#f0c000;"></div>
<div style="left:505.8px;top:180.6px;width:2px;height:107px;background:#f0c000;"></div>
<div style="left:505.8px;top:288px;width:2px;height:17.7px;background:#f0c000;"></div>
<div style="left:489px;top:306.2px;width:36px;height:11.6px;background:#000;border:1px solid #d8b010;"></div>
<span class="s" style="left:489px;top:307.7px;height:12px;line-height:12px;font-size:8.2px;color:#f0c828;width:36px;text-align:center;">13420 ps</span>
<div style="left:729.8px;top:165px;width:2.2px;height:153px;background:#ececec;"></div>
<div style="left:732px;top:166px;width:11.5px;height:12.5px;background:#808080;"></div>
<div style="left:732px;top:180.6px;width:11.5px;height:107px;background:#f0f0f0;"></div>
<div style="left:732.5px;top:181.5px;width:10.5px;height:10.5px;background:#f0f0f0;border:1px solid #fff;border-right-color:#8a8a8a;border-bottom-color:#8a8a8a;"></div>
<svg style="left:735.2px;top:186.5px;" width="5" height="3" viewBox="0 0 5 3"><path d="M2.500 0l2.500 2.800h-5z" fill="#000"/></svg>
<div style="left:732.5px;top:192.5px;width:10.5px;height:82px;background:#f4f4f4;border:1px solid #fff;border-right-color:#a8a8a8;border-bottom-color:#a8a8a8;"></div>
<div style="left:732.5px;top:275px;width:10.5px;height:10.5px;background:#f0f0f0;border:1px solid #fff;border-right-color:#8a8a8a;border-bottom-color:#8a8a8a;"></div>
<div style="left:733px;top:200.5px;width:9.5px;height:4px;background:#fdfdfd;"></div>
<svg style="left:735.2px;top:279px;" width="5" height="3" viewBox="0 0 5 3"><path d="M0 0h5l-2.500 2.800z" fill="#000"/></svg>
<div style="left:732px;top:289.7px;width:13px;height:29px;background:#f0f0f0;"></div>
<div style="left:192px;top:337.8px;width:553px;height:16px;background:#f0f0f0;"></div>
<div style="left:190.5px;top:337.5px;width:59px;height:14.8px;background:#dcdcdc;border:1px solid #5a5a5a;border-top-color:#6a6a6a;border-radius:0 0 2px 2px;"></div>
<svg style="left:193px;top:339px;" width="12" height="12" viewBox="0 0 12 12"><path d="M2.500 3.500l3-3 1.500 1.500-3 3z" fill="#c828d8"/><rect x="6.500" y="4" width="5" height="5.500" fill="#18a048"/><path d="M4.500 3l2-1.500 2.500 2-2 2z" fill="#18d8f0"/><path d="M4 4.500l4 3.500-3.500 4-4-3.500z" fill="#1a5af0"/></svg>
<span class="s" style="left:208.5px;top:339.1px;height:12px;line-height:12px;font-size:8.2px;color:#222;">Objects</span>
<svg style="left:240px;top:341.6px;" width="6" height="6" viewBox="0 0 6 6"><path d="M.5 .5l5 5M5.500 .5l-5 5" stroke="#b0b0b0" stroke-width="1.400"/></svg>
<div style="left:249.5px;top:336.8px;width:52.5px;height:15.7px;background:#f4f4f4;border:1px solid #5a5a5a;border-top-color:#f4f4f4;border-radius:0 0 2px 2px;"></div>
<svg style="left:254px;top:340px;" width="10" height="10" viewBox="0 0 10 10"><rect x=".5" y=".5" width="9" height="9" fill="#0a0a0a" stroke="#555"/><rect x="0" y="0" width="10" height="2" fill="#333"/><path d="M2 6.500h1.500v-2h2v2h2.500" fill="none" stroke="#18c838" stroke-width="1"/></svg>
<span class="s" style="left:266.5px;top:338.85px;height:12px;line-height:12px;font-size:8.2px;color:#222;">Wave</span>
<svg style="left:292.5px;top:341.35px;" width="6" height="6" viewBox="0 0 6 6"><path d="M.5 .5l5 5M5.500 .5l-5 5" stroke="#b0b0b0" stroke-width="1.400"/></svg>
<div style="left:302px;top:337.5px;width:65px;height:14.8px;background:#f0f0f0;border:1px solid #5a5a5a;border-top-color:#6a6a6a;border-radius:0 0 2px 2px;"></div>
<svg style="left:307.5px;top:339.5px;" width="8" height="10" viewBox="0 0 8 10"><path d="M.5 .5h4.500l2.500 2.500v6.500h-7z" fill="#fff" stroke="#555" stroke-width=".8"/></svg>
<span class="s" style="left:321px;top:339.1px;height:12px;line-height:12px;font-size:8.2px;color:#222;">tb_alu.sv</span>
<svg style="left:358px;top:341.6px;" width="6" height="6" viewBox="0 0 6 6"><path d="M.5 .5l5 5M5.500 .5l-5 5" stroke="#b0b0b0" stroke-width="1.400"/></svg>
<div style="left:0px;top:353.5px;width:925px;height:4.5px;background:#c4c4c4;"></div>
<div style="left:0px;top:358px;width:925px;height:2px;background:#e4e4e4;"></div>
<svg style="left:0px;top:359.5px;" width="12" height="12" viewBox="0 0 12 12"><path d="M1.500 11.500v-6c0-6 9-6 9 0v6h-2.500v-4.500h-4v4.500z" fill="#c8c8c8" stroke="#4a4a4a" stroke-width=".9"/></svg>
<span class="s" style="left:13px;top:361.1px;height:12px;line-height:12px;font-size:7.9px;color:#222;">Transcript</span>
<div style="left:53px;top:364.1px;width:413.2px;height:1px;background:#9c9c9c;"></div>
<div style="left:53px;top:365.1px;width:413.2px;height:1px;background:#fbfbfb;"></div>
<div style="left:53px;top:368px;width:413.2px;height:1px;background:#9c9c9c;"></div>
<div style="left:53px;top:369px;width:413.2px;height:1px;background:#fbfbfb;"></div>
<div style="left:482.2px;top:364.1px;width:413.8px;height:1px;background:#9c9c9c;"></div>
<div style="left:482.2px;top:365.1px;width:413.8px;height:1px;background:#fbfbfb;"></div>
<div style="left:482.2px;top:368px;width:413.8px;height:1px;background:#9c9c9c;"></div>
<div style="left:482.2px;top:369px;width:413.8px;height:1px;background:#fbfbfb;"></div>
<div style="left:896px;top:364.1px;width:1px;height:5px;background:#9c9c9c;"></div>
<svg style="left:468.2px;top:363.6px;" width="14" height="6" viewBox="0 0 14 6"><rect x="0.0" y="0" width="1" height="1" fill="#6a6a6a"/><rect x="2.3" y="0" width="1" height="1" fill="#6a6a6a"/><rect x="4.6" y="0" width="1" height="1" fill="#6a6a6a"/><rect x="6.9" y="0" width="1" height="1" fill="#6a6a6a"/><rect x="9.2" y="0" width="1" height="1" fill="#6a6a6a"/><rect x="11.5" y="0" width="1" height="1" fill="#6a6a6a"/><rect x="1.1" y="2.3" width="1" height="1" fill="#6a6a6a"/><rect x="3.4" y="2.3" width="1" height="1" fill="#6a6a6a"/><rect x="5.7" y="2.3" width="1" height="1" fill="#6a6a6a"/><rect x="8.0" y="2.3" width="1" height="1" fill="#6a6a6a"/><rect x="10.3" y="2.3" width="1" height="1" fill="#6a6a6a"/><rect x="12.6" y="2.3" width="1" height="1" fill="#6a6a6a"/><rect x="0.0" y="4.6" width="1" height="1" fill="#6a6a6a"/><rect x="2.3" y="4.6" width="1" height="1" fill="#6a6a6a"/><rect x="4.6" y="4.6" width="1" height="1" fill="#6a6a6a"/><rect x="6.9" y="4.6" width="1" height="1" fill="#6a6a6a"/><rect x="9.2" y="4.6" width="1" height="1" fill="#6a6a6a"/><rect x="11.5" y="4.6" width="1" height="1" fill="#6a6a6a"/></svg>
<div style="left:0px;top:372.5px;width:925px;height:159px;background:#fff;border-top:1px solid #555;border-left:1px solid #555;"></div>
<span class="m" style="left:2.8px;top:375.7px;height:11px;line-height:11px;font-size:8.525px;color:#2a2a2a;">#   Totals: Errors:   0, Warnings:   0</span>
<span class="m" style="left:2.8px;top:386.72px;height:11px;line-height:11px;font-size:8.525px;color:#2a2ad0;"># ** Note: (vsim-220) 'C:/Users/psimpson/OneDrive - Lattice Semiconductor Corp/Designs/SIMqrun2/wp.mpf' is used as the project file</span>
<span class="m" style="left:2.8px;top:397.74px;height:11px;line-height:11px;font-size:8.525px;color:#2a2ad0;"># vsim -lib qrun.out/work -wlf vsim.wlf -gui -do "view wave" -do "add wave /*" -do "run 1000ns" -statslog qrun.out/stats_log -a</span>
<span class="m" style="left:2.8px;top:408.76px;height:11px;line-height:11px;font-size:8.525px;color:#2a2ad0;">ppendlog -l qrun.log</span>
<span class="m" style="left:2.8px;top:419.78px;height:11px;line-height:11px;font-size:8.525px;color:#2a2ad0;"># Start time: 16:00:29 on Feb 17,2026</span>
<span class="m" style="left:2.8px;top:430.8px;height:11px;line-height:11px;font-size:8.525px;color:#2a2ad0;"># Loading sv_std.std</span>
<span class="m" style="left:2.8px;top:441.82px;height:11px;line-height:11px;font-size:8.525px;color:#2a2ad0;"># Loading work.tb_alu(fast)</span>
<span class="m" style="left:2.8px;top:452.84px;height:11px;line-height:11px;font-size:8.525px;color:#2a2ad0;"># Loading dutLib.alu_top(fast)</span>
<span class="m" style="left:2.8px;top:463.86px;height:11px;line-height:11px;font-size:8.525px;color:#2a2ad0;"># Loading dutLib.register(fast)</span>
<span class="m" style="left:2.8px;top:474.88px;height:11px;line-height:11px;font-size:8.525px;color:#2a2ad0;"># Loading dutLib.alu(fast)</span>
<span class="m" style="left:2.8px;top:485.9px;height:11px;line-height:11px;font-size:8.525px;color:#2a2a2a;"># view wave</span>
<span class="m" style="left:2.8px;top:496.92px;height:11px;line-height:11px;font-size:8.525px;color:#2a2a2a;"># .main_pane.wave.interior.cs.body.pw.wf</span>
<span class="m" style="left:2.8px;top:507.94px;height:11px;line-height:11px;font-size:8.525px;color:#2a2a2a;"># add wave /*</span>
<span class="m" style="left:2.8px;top:518.96px;height:11px;line-height:11px;font-size:8.525px;color:#2a2a2a;"># run 1000ns</span>
<div style="left:0px;top:531.5px;width:925px;height:18.5px;background:#f0f0f0;"></div>
<div style="left:128.5px;top:534.5px;width:46px;height:16px;background:#f0f0f0;border:1px solid #b8b8b8;border-right-color:#fff;"></div>
<span class="s" style="left:131px;top:537.4px;height:12px;line-height:12px;font-size:8.2px;color:#222;">Project : wp</span>
<div style="left:176.5px;top:534.5px;width:147px;height:16px;background:#f0f0f0;border:1px solid #b8b8b8;border-right-color:#fff;"></div>
<span class="s" style="left:179px;top:537.4px;height:12px;line-height:12px;font-size:8.2px;color:#222;">Now: 70 ns  Delta: 0</span>
<div style="left:324.5px;top:534.5px;width:250px;height:16px;background:#f0f0f0;border:1px solid #b8b8b8;border-right-color:#fff;"></div>
<span class="s" style="left:327px;top:537.4px;height:12px;line-height:12px;font-size:8.2px;color:#222;">tb_alu(fast)</span>
<div style="left:569.2px;top:284.5px;width:360px;height:270px;background:#f0f0f0;border-radius:4px 0 0 0;box-shadow:0 0 2.500px rgba(0,0,0,.28);"></div>
<div style="left:569.2px;top:322px;width:2.3px;height:228px;background:#b4b4b4;"></div>
<div style="left:569.2px;top:284.5px;width:356.3px;height:21px;background:#faf2ef;border-radius:4px 0 0 0;"></div>
<svg style="left:575.5px;top:289px;" width="10" height="11" viewBox="0 0 10 11"><path d="M.5 .5h5.500l3 3v7h-8.500z" fill="#fff" stroke="#6a6a6a" stroke-width=".9"/><path d="M6 .5v3h3" fill="none" stroke="#6a6a6a" stroke-width=".8"/></svg>
<span class="s" style="left:590.5px;top:289px;height:12px;line-height:12px;font-size:8.74px;color:#2a2a2a;">C:/Users/psimpson/OneDrive - Lattice Semiconductor Corp...</span>
<svg style="left:838px;top:288px;" width="87" height="14" viewBox="0 0 87 14"><path d="M4 7h8" stroke="#222" stroke-width="1"/><rect x="38" y="3.500" width="7" height="7" fill="none" stroke="#222" stroke-width="1"/><path d="M72.500 3.500l7 7m0-7l-7 7" stroke="#222" stroke-width="1"/></svg>
<div style="left:569.2px;top:305.3px;width:356.3px;height:16.5px;background:#fff;"></div>
<span class="s" style="left:573.8px;top:308.3px;height:12px;line-height:12px;font-size:8.7px;color:#222;">File</span>
<span class="s" style="left:597px;top:308.3px;height:12px;line-height:12px;font-size:8.7px;color:#222;">Edit</span>
<span class="s" style="left:622.4px;top:308.3px;height:12px;line-height:12px;font-size:8.7px;color:#222;">View</span>
<span class="s" style="left:651.2px;top:308.3px;height:12px;line-height:12px;font-size:8.7px;color:#222;">Tools</span>
<span class="s" style="left:681.7px;top:308.3px;height:12px;line-height:12px;font-size:8.7px;color:#222;">Bookmarks</span>
<span class="s" style="left:735px;top:308.3px;height:12px;line-height:12px;font-size:8.7px;color:#222;">Window</span>
<span class="s" style="left:777.7px;top:308.3px;height:12px;line-height:12px;font-size:8.7px;color:#222;">Help</span>
<div style="left:571.5px;top:322.4px;width:353.5px;height:13.2px;background:#98b4d9;border-top:1px solid #c4d4ea;"></div>
<svg style="left:573px;top:323.8px;" width="8" height="10" viewBox="0 0 8 10"><path d="M.5 .5h4.500l2.500 2.500v6.500h-7z" fill="#fff" stroke="#555" stroke-width=".7"/></svg>
<span class="s" style="left:584.5px;top:323.5px;height:12px;line-height:12px;font-size:7.95px;color:#1a2a4a;">pson/OneDrive - Lattice Semiconductor Corp/Designs/SIMqrun2/aluqrun.f - Default</span>
<svg style="left:878.5px;top:326.3px;" width="14" height="6" viewBox="0 0 14 6"><rect x="0.0" y="0.0" width="1" height="1" fill="#eef3fa"/><rect x="2.3" y="0.0" width="1" height="1" fill="#eef3fa"/><rect x="4.6" y="0.0" width="1" height="1" fill="#eef3fa"/><rect x="6.9" y="0.0" width="1" height="1" fill="#eef3fa"/><rect x="9.2" y="0.0" width="1" height="1" fill="#eef3fa"/><rect x="11.5" y="0.0" width="1" height="1" fill="#eef3fa"/><rect x="1.1" y="2.3" width="1" height="1" fill="#eef3fa"/><rect x="3.4" y="2.3" width="1" height="1" fill="#eef3fa"/><rect x="5.7" y="2.3" width="1" height="1" fill="#eef3fa"/><rect x="8.0" y="2.3" width="1" height="1" fill="#eef3fa"/><rect x="10.3" y="2.3" width="1" height="1" fill="#eef3fa"/><rect x="12.6" y="2.3" width="1" height="1" fill="#eef3fa"/><rect x="0.0" y="4.6" width="1" height="1" fill="#eef3fa"/><rect x="2.3" y="4.6" width="1" height="1" fill="#eef3fa"/><rect x="4.6" y="4.6" width="1" height="1" fill="#eef3fa"/><rect x="6.9" y="4.6" width="1" height="1" fill="#eef3fa"/><rect x="9.2" y="4.6" width="1" height="1" fill="#eef3fa"/><rect x="11.5" y="4.6" width="1" height="1" fill="#eef3fa"/></svg>
<div style="left:894.5px;top:324.5px;width:9px;height:9.5px;background:#f0f0f0;border:1px solid #fff;border-right-color:#7a7a7a;border-bottom-color:#7a7a7a;"></div>
<svg style="left:895px;top:325.5px;" width="8" height="8" viewBox="0 0 8 8"><path d="M4 1v6M1 4h6" stroke="#000" stroke-width="1.300"/></svg>
<div style="left:906.5px;top:324.5px;width:9px;height:9.5px;background:#f0f0f0;border:1px solid #fff;border-right-color:#7a7a7a;border-bottom-color:#7a7a7a;"></div>
<svg style="left:907px;top:325.5px;" width="8" height="8" viewBox="0 0 8 8"><path d="M7 1l-5 5M1.500 3v3.500h3.500" fill="none" stroke="#000" stroke-width="1.100"/></svg>
<div style="left:918.5px;top:324.5px;width:9px;height:9.5px;background:#f0f0f0;border:1px solid #fff;border-right-color:#7a7a7a;border-bottom-color:#7a7a7a;"></div>
<svg style="left:919px;top:325.5px;" width="8" height="8" viewBox="0 0 8 8"><path d="M1.200 1.200l5.600 5.600M6.800 1.200l-5.600 5.600" stroke="#000" stroke-width="1.100"/></svg>
<div style="left:569px;top:335.5px;width:253px;height:23.5px;background:#f0f0f0;border-top:1px solid #fbfbfb;border-left:1px solid #fbfbfb;border-right:1px solid #a0a0a0;border-bottom:1px solid #a0a0a0;"></div>
<div style="left:572px;top:338.5px;width:1px;height:17.5px;background:#a0a0a0;"></div>
<div style="left:573px;top:338.5px;width:1px;height:17.5px;background:#ffffff;"></div>
<svg style="left:581.5px;top:340.7px;" width="10" height="12" viewBox="0 0 10 12"><path d="M.5 .5h6l2.500 2.500v8.500h-8.500z" fill="#fcfcfc" stroke="#a4a4a4"/><path d="M9 3v8.500h-8.500" fill="none" stroke="#6e6e6e"/><path d="M2 2.500h2.500M2.500 4.500h3M2 6.500h4.500M2.500 8.500h2.500" stroke="#3a3a3a" stroke-width="1" stroke-dasharray="1.500 .5"/></svg>
<svg style="left:596px;top:346.2px;" width="4" height="3" viewBox="0 0 4 3"><path d="M0 0h4L2 2.4z" fill="#000"/></svg>
<svg style="left:604px;top:341.7px;" width="13" height="10" viewBox="0 0 13 10"><path d="M7 2.500c1.500-2 3.500-2 4.500-.5" fill="none" stroke="#222" stroke-width=".9"/><path d="M10.300 .8l1.500 1.400-2 .5z" fill="#222"/><path d="M.5 9.500v-6h3l1 1h4v1.500" fill="#d8d84a" stroke="#55550a" stroke-width=".9"/><path d="M.5 9.500l2.500-4h9l-2.500 4z" fill="#b4b420" stroke="#55550a" stroke-width=".9"/></svg>
<svg style="left:621px;top:341.2px;" width="11" height="11" viewBox="0 0 11 11"><rect x=".5" y=".5" width="10" height="10" fill="#8a8a00" stroke="#4a4a00"/><rect x="2.500" y="1" width="6" height="4.500" fill="#fff"/><rect x="3" y="7" width="5" height="3.500" fill="#111"/><rect x="6.200" y="7.600" width="1.200" height="2.400" fill="#ddd"/></svg>
<svg style="left:636.5px;top:340.7px;" width="13" height="12" viewBox="0 0 13 12"><path d="M.5 5.500c1-4 6-4.500 8.500-2l1.500-2 .5 5.500-5-.5 1.500-1.500c-1.500-1.500-4-1-5 .8z" fill="#a4d6a8"/><path d="M12.500 6.500c-1 4-6 4.500-8.500 2l-1.500 2-.5-5.500 5 .5-1.500 1.500c1.500 1.500 4 1 5-.8z" fill="#a4d6a8"/></svg>
<svg style="left:652.5px;top:341.2px;" width="13" height="11" viewBox="0 0 13 11"><path d="M3.500 4l1.500-3.500h5l-1 3.500z" fill="#fff" stroke="#333" stroke-width=".8"/><path d="M1 5.500l2-1.800h8.500l1 1.800v3.500h-11.500z" fill="#d8d8d8" stroke="#222" stroke-width=".9"/><rect x="1" y="6" width="11.500" height="1.600" fill="#333"/><rect x="5.500" y="6.300" width="2" height="1" fill="#e6d700"/><path d="M2.500 9.500h8.500v1h-8.500z" fill="#fff" stroke="#222" stroke-width=".7"/></svg>
<div style="left:671px;top:341.2px;width:1px;height:11px;border-left:1px dotted #8c8c8c;"></div>
<svg style="left:679.5px;top:340.7px;" width="9" height="12" viewBox="0 0 9 12"><path d="M1.500 .5l4 7M7 .5l-4 7" stroke="#222" stroke-width="1"/><circle cx="2.300" cy="9.300" r="1.600" fill="none" stroke="#2a3cff" stroke-width="1"/><circle cx="6.300" cy="9.300" r="1.600" fill="none" stroke="#2a3cff" stroke-width="1"/></svg>
<svg style="left:694px;top:341.2px;" width="11" height="11" viewBox="0 0 11 11"><rect x=".5" y=".5" width="5.500" height="6.500" fill="#fff" stroke="#333" stroke-width=".9"/><rect x="4.500" y="3.500" width="5.500" height="6.500" fill="#fff" stroke="#1a2a9a" stroke-width=".9"/><path d="M6 5.500h2.500M6 7h2.500M6 8.500h2.500" stroke="#1a2a9a" stroke-width=".7"/></svg>
<svg style="left:710px;top:341.2px;" width="12" height="11" viewBox="0 0 12 11"><rect x=".5" y="1.500" width="8.500" height="8.500" fill="#8a8a3a" stroke="#333" stroke-width=".9"/><rect x="2.500" y=".3" width="4.500" height="2.200" fill="#ccc" stroke="#333" stroke-width=".7"/><rect x="5" y="5" width="6" height="5.500" fill="#fff" stroke="#1a2a9a" stroke-width=".9"/><path d="M6.300 7h3.400M6.300 8.600h3.400" stroke="#1a2a9a" stroke-width=".7"/></svg>
<svg style="left:726.5px;top:341.2px;" width="12" height="11" viewBox="0 0 12 11"><g><path d="M3 6.500c-1-3 1.500-5 4-5s4.500 2.500 3.500 5" fill="none" stroke="#111" stroke-width="1.300"/><path d="M.6 4.300l2.400 3.500 2.200-3.300z" fill="#111"/><path d="M.5 10h10.500" stroke="#111" stroke-width="1.300"/></g></svg>
<svg style="left:741.6px;top:341.2px;" width="12" height="11" viewBox="0 0 12 11"><g transform="translate(12,0) scale(-1,1)"><path d="M3 6.500c-1-3 1.500-5 4-5s4.500 2.500 3.500 5" fill="none" stroke="#222" stroke-width="1.300"/><path d="M.6 4.300l2.400 3.500 2.200-3.300z" fill="#222"/><path d="M.5 10h10.500" stroke="#222" stroke-width="1.300"/></g></svg>
<div style="left:760px;top:341.2px;width:1px;height:11px;border-left:1px dotted #8c8c8c;"></div>
<svg style="left:766.5px;top:341.2px;" width="11" height="11" viewBox="0 0 11 11"><circle cx="5.500" cy="5.500" r="5" fill="#8fd488"/><circle cx="5.500" cy="5.500" r="4.200" fill="#58b650"/><circle cx="5.500" cy="5.500" r="1.500" fill="#f4fff2"/><path d="M2.500 3.500a3.500 3.500 0 0 1 6 0" fill="none" stroke="#a8e4a0" stroke-width=".8"/></svg>
<svg style="left:780.5px;top:346.2px;" width="4" height="3" viewBox="0 0 4 3"><path d="M0 0h4L2 2.4z" fill="#000"/></svg>
<svg style="left:788px;top:341.2px;" width="12" height="11" viewBox="0 0 12 11"><path d="M1 10.500v-4.500l1.500-5h2l.8 3h1.400l.8-3h2l1.500 5v4.500h-4v-4h-2v4z" fill="#111"/><path d="M2.200 7v2.500M9.800 7v2.500" stroke="#777" stroke-width=".8"/></svg>
<svg style="left:805.5px;top:341.2px;" width="11" height="11" viewBox="0 0 11 11"><rect x=".5" y=".5" width="3.500" height="3.500" fill="#fff" stroke="#222" stroke-width=".9"/><rect x=".5" y="6.500" width="3.500" height="3.500" fill="#fff" stroke="#222" stroke-width=".9"/><path d="M4 2.300h6M4 8.300h6M2.300 4v2.500" stroke="#222" stroke-width=".9"/></svg>
<div style="left:823px;top:335.5px;width:93.5px;height:23.5px;background:#f0f0f0;border-top:1px solid #fbfbfb;border-left:1px solid #fbfbfb;border-right:1px solid #a0a0a0;border-bottom:1px solid #a0a0a0;"></div>
<div style="left:826px;top:338.5px;width:1px;height:17.5px;background:#a0a0a0;"></div>
<div style="left:827px;top:338.5px;width:1px;height:17.5px;background:#ffffff;"></div>
<svg style="left:834.5px;top:340.7px;" width="12" height="12" viewBox="0 0 12 12"><path d="M3 1c2 1 3 3 2 5s-1 3 1 5M6.500 1v4M1 4l2.500 2M8 6l2 3" fill="none" stroke="#555" stroke-width=".9"/><path d="M8 2.500l2 1M1.500 9l2 1" stroke="#4a5ad8" stroke-width=".9"/></svg>
<svg style="left:850px;top:340.7px;" width="12" height="12" viewBox="0 0 12 12"><rect x="1" y="2" width="9.500" height="8.500" fill="#fff" stroke="#4a4a9a" stroke-width=".8" stroke-dasharray="1.500 1"/><path d="M5 3.500c0-1.500 2.500-1.500 2.500 0 0 1-1.200 1-1.200 2.200" fill="none" stroke="#2a6ad8" stroke-width="1.100"/><path d="M3 8.500h5" stroke="#2a6ad8" stroke-width="1"/></svg>
<svg style="left:866px;top:340.7px;" width="12" height="12" viewBox="0 0 12 12"><path d="M1.500 1v3M4.500 1v3M7.500 1v3M10.500 1v3" stroke="#4a5ad8" stroke-width=".9"/><rect x=".5" y="4.500" width="11" height="6" fill="none" stroke="#555" stroke-width=".8" stroke-dasharray="1 1"/><path d="M3.500 4.500v6M6.500 4.500v6M9 4.500v6M.5 7.500h11" stroke="#555" stroke-width=".7" stroke-dasharray="1 1"/></svg>
<svg style="left:882.7px;top:340.7px;" width="12" height="12" viewBox="0 0 12 12"><path d="M3 8.500l2-7.500h5l1.500 7.500z" fill="#e8e8f4" stroke="#333" stroke-width=".9"/><path d="M5 3h4M4.600 5h5" stroke="#5a6ad8" stroke-width=".7"/><circle cx="2.800" cy="9.800" r="1.900" fill="#c01818" stroke="#400" stroke-width=".5"/><circle cx="10" cy="9.800" r="1.900" fill="#c01818" stroke="#400" stroke-width=".5"/><path d="M1 1.500l2 6" stroke="#333" stroke-width="1"/></svg>
<svg style="left:898.6px;top:340.7px;" width="12" height="12" viewBox="0 0 12 12"><rect x=".5" y="1.500" width="8.500" height="9.500" fill="#fff" stroke="#444" stroke-width=".9"/><path d="M2 4h5M2 6h5M2 8h4" stroke="#666" stroke-width=".7"/><path d="M3 .8l8 8M10.500 .8l-7 8" stroke="#c01818" stroke-width="1.300"/><path d="M8.500 10.500h3M10 9v3" stroke="#2a3ad8" stroke-width="1"/></svg>
<div style="left:569px;top:359.5px;width:132.5px;height:24px;background:#f0f0f0;border-top:1px solid #fbfbfb;border-left:1px solid #fbfbfb;border-right:1px solid #a0a0a0;border-bottom:1px solid #a0a0a0;"></div>
<div style="left:572px;top:362.5px;width:1px;height:18px;background:#a0a0a0;"></div>
<div style="left:573px;top:362.5px;width:1px;height:18px;background:#ffffff;"></div>
<svg style="left:582px;top:364.8px;" width="12" height="12" viewBox="0 0 12 12"><path d="M6 0v4" stroke="#1838e8" stroke-width="3.200"/><path d="M6 7.500l-4.500-4.500h9z" fill="#1838e8"/><path d="M6 6v2.500" stroke="#1838e8" stroke-width="1.600"/><circle cx="6" cy="10.800" r="1.500" fill="#1838e8"/></svg>
<svg style="left:597px;top:364.8px;" width="12" height="12" viewBox="0 0 12 12"><path d="M2.200 8c0-5.500 4.500-6 7-3.200" fill="none" stroke="#1838e8" stroke-width="3.200"/><path d="M12 9.500l-6-1 5.500-5z" fill="#1838e8"/><circle cx="2.300" cy="10.500" r="1.500" fill="#1838e8"/></svg>
<svg style="left:614px;top:364.8px;" width="12" height="12" viewBox="0 0 12 12"><path d="M6 3.500v5" stroke="#1838e8" stroke-width="3.200"/><path d="M6 0l-4.500 4.500h9z" fill="#1838e8"/><circle cx="6" cy="10.800" r="1.500" fill="#1838e8"/></svg>
<div style="left:632px;top:365.3px;width:1px;height:11px;border-left:1px dotted #8c8c8c;"></div>
<svg style="left:638.8px;top:364.8px;" width="12" height="12" viewBox="0 0 12 12"><path d="M6 0v3.500" stroke="#1838e8" stroke-width="3.200"/><path d="M6 7l-4.500-4.500h9z" fill="#1838e8"/><path d="M6 6v3" stroke="#1838e8" stroke-width="1.600"/><path d="M1 10.800h10" stroke="#1838e8" stroke-width="2" stroke-dasharray="1.800 .9"/></svg>
<svg style="left:653px;top:370.8px;" width="4" height="3" viewBox="0 0 4 3"><path d="M0 0h4L2 2.4z" fill="#000"/></svg>
<svg style="left:660.6px;top:364.8px;" width="12" height="12" viewBox="0 0 12 12"><path d="M2.200 7.500c0-5 4.500-5.500 7-3" fill="none" stroke="#1838e8" stroke-width="3.200"/><path d="M12 9l-6-1 5.500-5z" fill="#1838e8"/><path d="M1 10.800h10" stroke="#1838e8" stroke-width="2" stroke-dasharray="1.800 .9"/></svg>
<svg style="left:675.5px;top:370.8px;" width="4" height="3" viewBox="0 0 4 3"><path d="M0 0h4L2 2.4z" fill="#000"/></svg>
<svg style="left:683.7px;top:364.8px;" width="12" height="12" viewBox="0 0 12 12"><path d="M6 3.500v5" stroke="#1838e8" stroke-width="3.200"/><path d="M6 0l-4.500 4.500h9z" fill="#1838e8"/><path d="M1 10.800h10" stroke="#1838e8" stroke-width="2" stroke-dasharray="1.800 .9"/></svg>
<div style="left:702px;top:359.5px;width:80px;height:24px;background:#f0f0f0;border-top:1px solid #fbfbfb;border-left:1px solid #fbfbfb;border-right:1px solid #a0a0a0;border-bottom:1px solid #a0a0a0;"></div>
<div style="left:705px;top:362.5px;width:1px;height:18px;background:#a0a0a0;"></div>
<div style="left:706px;top:362.5px;width:1px;height:18px;background:#ffffff;"></div>
<svg style="left:712.6px;top:365.3px;" width="13" height="11" viewBox="0 0 13 11"><g><path d="M1.500 .5l5.500 10M7 .5l-5.500 10" stroke="#9a1010" stroke-width="1.400"/><path d="M12 2.300v6.400l-4.300-3.200z" fill="#000"/></g></svg>
<svg style="left:728.3px;top:365.3px;" width="13" height="11" viewBox="0 0 13 11"><g transform="translate(13,0) scale(-1,1)"><path d="M1.500 .5l5.500 10M7 .5l-5.500 10" stroke="#9a1010" stroke-width="1.400"/><path d="M12 2.300v6.400l-4.300-3.200z" fill="#000"/></g></svg>
<svg style="left:745.5px;top:364.8px;" width="15" height="15" viewBox="0 0 15 15"><rect x=".5" y=".5" width="13.500" height="13.700" fill="#f4f4f4" stroke="#e4e4e4"/><path d="M.5 14.200h14M14.200 .5v14" stroke="#7a7a7a" stroke-width="1"/><rect x="4.200" y="3.500" width="6.500" height="8" fill="#fff" stroke="#111" stroke-width="1"/><path d="M5.500 2.500v2M8 2.500v2" stroke="#111" stroke-width=".8"/><path d="M5 6h1.300M8.800 6h1.300M5 9h1.300M8.800 9h1.300" stroke="#c01010" stroke-width="1"/><path d="M6 7.500h3" stroke="#111" stroke-width="1"/></svg>
<svg style="left:766.5px;top:366.3px;" width="11" height="12" viewBox="0 0 11 12"><path d="M.8 .8l6.500 7.500M6.500 .8l-5 8" stroke="#9a1010" stroke-width="1.300"/><path d="M9 0l-8 10" stroke="#222" stroke-width=".9"/><path d="M6 4.500l3 1 1.500 3.500-1.200 1.500-2.800-2.500z" fill="#1020d8" stroke="#0a0a6a" stroke-width=".5"/></svg>
<div style="left:782.5px;top:359.5px;width:113.5px;height:24px;background:#f0f0f0;border-top:1px solid #fbfbfb;border-left:1px solid #fbfbfb;border-right:1px solid #a0a0a0;border-bottom:1px solid #a0a0a0;"></div>
<div style="left:785.5px;top:362.5px;width:1px;height:18px;background:#a0a0a0;"></div>
<div style="left:786.5px;top:362.5px;width:1px;height:18px;background:#ffffff;"></div>
<svg style="left:794.3px;top:364.8px;" width="12" height="12" viewBox="0 0 12 12"><path d="M.8 3.200l7-2.200v6.500l-7 2.200z" fill="#58b0f4" stroke="#3a8ae0" stroke-width=".6"/><path d="M1.800 4.300l5-1.600v2.200l-5 1.600z" fill="#b8e0ff"/><path d="M8.300 .8v6" stroke="#c89050" stroke-width="1.400"/><circle cx="8.800" cy="9" r="2.300" fill="#6aa830"/><circle cx="8.800" cy="9" r="1" fill="#f0ffe8"/></svg>
<svg style="left:808.5px;top:370.8px;" width="4" height="3" viewBox="0 0 4 3"><path d="M0 0h4L2 2.4z" fill="#000"/></svg>
<svg style="left:817px;top:364.8px;" width="12" height="12" viewBox="0 0 12 12"><path d="M.8 3.200l7-2.200v6.500l-7 2.200z" fill="#58b0f4" stroke="#3a8ae0" stroke-width=".6"/><path d="M1.800 4.300l5-1.600v2.200l-5 1.600z" fill="#b8e0ff"/><path d="M8.300 .8v6" stroke="#c89050" stroke-width="1.400"/><circle cx="8.800" cy="9" r="2.300" fill="#f08418"/><circle cx="8.800" cy="9" r="1" fill="#fff0e0"/></svg>
<svg style="left:831.5px;top:370.8px;" width="4" height="3" viewBox="0 0 4 3"><path d="M0 0h4L2 2.4z" fill="#000"/></svg>
<svg style="left:839.5px;top:364.8px;" width="12" height="12" viewBox="0 0 12 12"><path d="M.8 3.200l7-2.200v6.500l-7 2.200z" fill="#58b0f4" stroke="#3a8ae0" stroke-width=".6"/><path d="M1.800 4.300l5-1.600v2.200l-5 1.600z" fill="#b8e0ff"/><path d="M4.500 11l5.500-7 1.600 1.300-5.300 6.700z" fill="#f2c24c" stroke="#b8862a" stroke-width=".5"/></svg>
<svg style="left:855px;top:364.8px;" width="12" height="12" viewBox="0 0 12 12"><rect x="1" y="1.500" width="7.500" height="5.500" fill="#58b0f4" stroke="#3a8ae0" stroke-width=".6"/><path d="M8.500 .8v4" stroke="#c89050" stroke-width="1.200"/><rect x="4" y="4.500" width="7" height="6.500" fill="#dceeff" stroke="#3a7ad0" stroke-width=".8"/><rect x="5.500" y="8" width="4" height="2.500" fill="#e8d048"/><rect x="5.500" y="5.500" width="4" height="1.500" fill="#8ac0f0"/></svg>
<svg style="left:870px;top:370.8px;" width="4" height="3" viewBox="0 0 4 3"><path d="M0 0h4L2 2.4z" fill="#000"/></svg>
<svg style="left:878.5px;top:364.8px;" width="12" height="12" viewBox="0 0 12 12"><path d="M.8 3.200l7-2.200v6.500l-7 2.200z" fill="#58b0f4" stroke="#3a8ae0" stroke-width=".6"/><path d="M1.800 4.300l5-1.600v2.200l-5 1.600z" fill="#b8e0ff"/><path d="M4.500 7.200h3.200v-2.200l4 3.500-4 3.500v-2.200h-3.200z" fill="#5ab82a" stroke="#3a8a1a" stroke-width=".5"/></svg>
<div style="left:571px;top:384.5px;width:354px;height:11.5px;background:#f0f0f0;border-bottom:1px solid #a0a0a0;"></div>
<span class="s" style="left:582.5px;top:385.5px;height:12px;line-height:12px;font-size:8.2px;color:#222;">Ln#</span>
<div style="left:609px;top:384.5px;width:1px;height:11px;background:#6a6a6a;"></div>
<div style="left:840px;top:385.5px;width:81.5px;height:10.5px;background:#e2e9de;border:1px solid #8a8a8a;"></div>
<div style="left:851px;top:385.5px;width:1px;height:10.5px;background:#8a8a8a;"></div>
<div style="left:909px;top:385.5px;width:1px;height:10.5px;background:#8a8a8a;"></div>
<svg style="left:842px;top:387px;" width="8" height="8" viewBox="0 0 8 8"><path d="M1 0v7" stroke="#222" stroke-width="1"/><path d="M7.500 3.500h-5M4.500 1.500l-2.500 2 2.500 2" fill="none" stroke="#222" stroke-width=".9"/></svg>
<svg style="left:911.5px;top:387px;" width="8" height="8" viewBox="0 0 8 8"><path d="M7 0v7" stroke="#222" stroke-width="1"/><path d="M.5 3.500h5M3.500 1.500l2.500 2-2.500 2" fill="none" stroke="#222" stroke-width=".9"/></svg>
<svg style="left:854.5px;top:387px;" width="7" height="7" viewBox="0 0 7 7"><circle cx="3.500" cy="3.500" r="3" fill="#18b818" stroke="#0a6a0a" stroke-width=".6"/></svg>
<span class="m" style="left:864.3px;top:386px;height:12px;line-height:12px;font-size:8.525px;color:#222;">13420 ps</span>
<div style="left:923px;top:385.5px;width:2px;height:10.5px;background:#222;"></div>
<div style="left:571px;top:396px;width:37px;height:127.5px;background:#efefef;"></div>
<div style="left:608px;top:396px;width:9px;height:127.5px;background:#f8f8f8;"></div>
<div style="left:617px;top:396px;width:301px;height:127.5px;background:#fff;"></div>
<div style="left:918px;top:396px;width:7px;height:127.5px;background:#f0f0f0;"></div>
<div style="left:918.5px;top:409px;width:6.5px;height:114px;background:#cdcdcd;"></div>
<span class="s" style="right:331.7px;top:398.1px;height:11px;line-height:11px;font-size:8.2px;color:#8a8a8a;">1</span>
<span class="m" style="left:619.600px;top:398.0px;height:11px;line-height:11px;font-size:8.525px;width:297.200px;overflow:hidden"><span style="position:static;color:#1a8a2a">// Create library lib1 in qrun.out and compile testbench into it</span></span>
<span class="s" style="right:331.7px;top:409.07px;height:11px;line-height:11px;font-size:8.2px;color:#8a8a8a;">2</span>
<span class="m" style="left:619.600px;top:408.97px;height:11px;line-height:11px;font-size:8.525px;width:297.200px;overflow:hidden"><span style="position:static;color:#2a2ad0">-</span><span style="position:static;color:#222">makelib lib1 tb_alu</span><span style="position:static;color:#2a2ad0">.</span><span style="position:static;color:#222">sv </span><span style="position:static;color:#2a2ad0">-</span><span style="position:static;color:#c81818">end</span></span>
<span class="s" style="right:331.7px;top:420.04px;height:11px;line-height:11px;font-size:8.2px;color:#8a8a8a;">3</span>
<span class="s" style="right:331.7px;top:431.01px;height:11px;line-height:11px;font-size:8.2px;color:#8a8a8a;">4</span>
<span class="m" style="left:619.600px;top:430.91px;height:11px;line-height:11px;font-size:8.525px;width:297.200px;overflow:hidden"><span style="position:static;color:#1a8a2a">// Create library dutLib in qrun.out and compile testbench into it</span></span>
<span class="s" style="right:331.7px;top:441.98px;height:11px;line-height:11px;font-size:8.2px;color:#8a8a8a;">5</span>
<span class="m" style="left:619.600px;top:441.88px;height:11px;line-height:11px;font-size:8.525px;width:297.200px;overflow:hidden"><span style="position:static;color:#2a2ad0">-</span><span style="position:static;color:#222">makelib dutLib alu</span><span style="position:static;color:#2a2ad0">.</span><span style="position:static;color:#222">sv register</span><span style="position:static;color:#2a2ad0">.</span><span style="position:static;color:#222">sv alu_top</span><span style="position:static;color:#2a2ad0">.</span><span style="position:static;color:#222">sv </span><span style="position:static;color:#2a2ad0">-</span><span style="position:static;color:#c81818">end</span></span>
<span class="s" style="right:331.7px;top:452.95px;height:11px;line-height:11px;font-size:8.2px;color:#8a8a8a;">6</span>
<span class="s" style="right:331.7px;top:463.92px;height:11px;line-height:11px;font-size:8.2px;color:#8a8a8a;">7</span>
<span class="m" style="left:619.600px;top:463.82px;height:11px;line-height:11px;font-size:8.525px;width:297.200px;overflow:hidden"><span style="position:static;color:#1a8a2a">// Create a PDU (Pre-Optimized Design Unit) from module ml</span></span>
<span class="s" style="right:331.7px;top:474.89px;height:11px;line-height:11px;font-size:8.2px;color:#8a8a8a;">8</span>
<span class="m" style="left:619.600px;top:474.79px;height:11px;line-height:11px;font-size:8.525px;width:297.200px;overflow:hidden"><span style="position:static;color:#1a8a2a">// Useful for Lattice Libraries which will not change</span></span>
<span class="s" style="right:331.7px;top:485.86px;height:11px;line-height:11px;font-size:8.2px;color:#8a8a8a;">9</span>
<span class="m" style="left:619.600px;top:485.76px;height:11px;line-height:11px;font-size:8.525px;width:297.200px;overflow:hidden"><span style="position:static;color:#1a8a2a">// -makepdu ml_opt_pdu lib1.ml</span></span>
<span class="s" style="right:331.7px;top:496.83px;height:11px;line-height:11px;font-size:8.2px;color:#8a8a8a;">10</span>
<span class="m" style="left:619.600px;top:496.73px;height:11px;line-height:11px;font-size:8.525px;width:297.200px;overflow:hidden"><span style="position:static;color:#1a8a2a">//  -L dutLib</span></span>
<span class="s" style="right:331.7px;top:507.8px;height:11px;line-height:11px;font-size:8.2px;color:#8a8a8a;">11</span>
<span class="m" style="left:619.600px;top:507.7px;height:11px;line-height:11px;font-size:8.525px;width:297.200px;overflow:hidden"><span style="position:static;color:#1a8a2a">// -end</span></span>
<span class="s" style="right:331.70000000000005px;top:518.77px;height:4.200px;line-height:11px;font-size:8.2px;color:#8a8a8a;overflow:hidden">12</span>
<svg style="left:609.5px;top:464.5px;" width="7" height="50" viewBox="0 0 7 50"><rect x=".5" y=".5" width="5" height="5" fill="#fff" stroke="#6a6a6a" stroke-width=".8"/><path d="M1.800 3h2.600" stroke="#222" stroke-width=".8"/><path d="M3 6v41.500h3" fill="none" stroke="#6a6a6a" stroke-width=".9"/></svg>
<div style="left:571px;top:523.5px;width:354px;height:11.5px;background:#f6f6f6;"></div>
<div style="left:583px;top:529.4px;width:342px;height:1.9px;background:#5a5a5a;"></div>
<div style="left:571px;top:534.5px;width:354px;height:16px;background:#f0f0f0;border-top:1px solid #b8b8b8;"></div>
<div style="left:824px;top:536px;width:58px;height:14px;background:#f0f0f0;border:1px solid #a8a8a8;border-right-color:#fff;"></div>
<span class="s" style="left:826px;top:537.9px;height:12px;line-height:12px;font-size:8.2px;color:#222;">Ln:  25  Col:  0</span>
</body></html>
